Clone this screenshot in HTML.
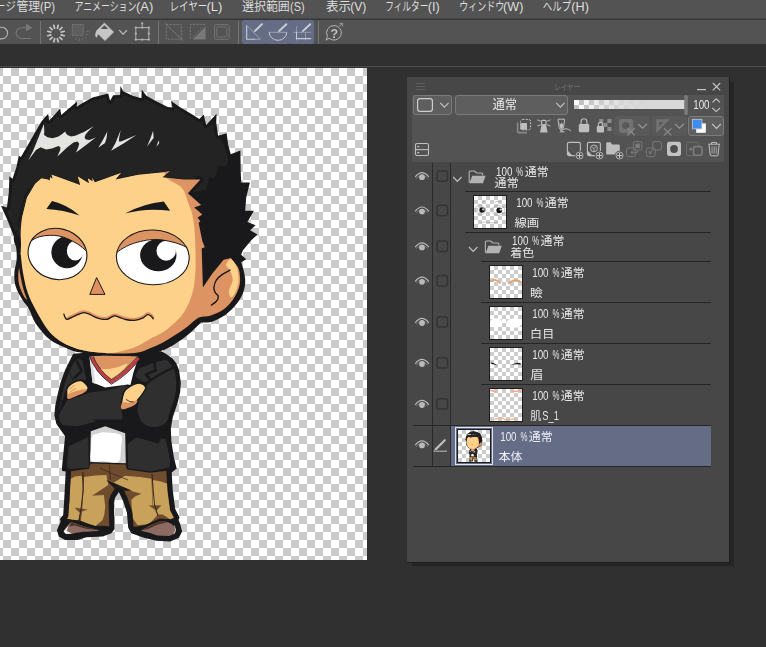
<!DOCTYPE html>
<html lang="ja">
<head>
<meta charset="utf-8">
<title>CLIP STUDIO PAINT</title>
<style>
*{box-sizing:border-box;margin:0;padding:0}
html,body{width:766px;height:647px;overflow:hidden;background:#303030}
svg#ui,svg#pn{position:absolute;left:0;top:0;display:block}
svg#pn{will-change:transform}
svg text{font-family:"Liberation Sans","Noto Sans CJK JP",sans-serif;white-space:pre}
</style>
</head>
<body>
<svg id="ui" width="766" height="647" viewBox="0 0 766 647">
<defs>
<pattern id="ck8" x="3" y="68" width="16" height="16" patternUnits="userSpaceOnUse"><rect width="16" height="16" fill="#ffffff"/><rect x="8" y="0" width="8" height="8" fill="#cacaca"/><rect x="0" y="8" width="8" height="8" fill="#cacaca"/></pattern>
<pattern id="ck4" x="0" y="0" width="8" height="8" patternUnits="userSpaceOnUse"><rect width="8" height="8" fill="#ffffff"/><rect x="4" y="0" width="4" height="4" fill="#cccccc"/><rect x="0" y="4" width="4" height="4" fill="#cccccc"/></pattern>
<pattern id="ck5" x="574" y="100" width="10" height="10" patternUnits="userSpaceOnUse"><rect width="10" height="10" fill="#ffffff"/><rect x="5" y="0" width="5" height="5" fill="#bdbdbd"/><rect x="0" y="5" width="5" height="5" fill="#bdbdbd"/></pattern>
<linearGradient id="opg" x1="0" x2="1" y1="0" y2="0"><stop offset="0" stop-color="#d8d8d8" stop-opacity="0"/><stop offset="0.2" stop-color="#d8d8d8" stop-opacity="0.5"/><stop offset="0.45" stop-color="#d8d8d8" stop-opacity="0.88"/><stop offset="0.7" stop-color="#d8d8d8" stop-opacity="1"/><stop offset="1" stop-color="#d8d8d8" stop-opacity="1"/></linearGradient>
</defs>
<rect x="0" y="0" width="766" height="647" fill="#303030"/>
<rect x="0" y="66" width="766" height="1" fill="#4e4e4e"/>
<rect x="0" y="0" width="766" height="19" fill="#535353"/>
<rect x="0" y="18.5" width="766" height="1.5" fill="#383838"/>
<text y="11.1" font-size="12" fill="#dedede"><tspan x="-4.63" textLength="20.34" lengthAdjust="spacingAndGlyphs">ージ</tspan><tspan x="16.43" textLength="23.73" lengthAdjust="spacingAndGlyphs">管理</tspan><tspan x="40.02" textLength="15.09" lengthAdjust="spacingAndGlyphs">(P)</tspan></text>
<text y="11.1" font-size="12" fill="#dedede"><tspan x="74.53" textLength="61.88" lengthAdjust="spacingAndGlyphs">アニメーション</tspan><tspan x="135.92" textLength="17.30" lengthAdjust="spacingAndGlyphs">(A)</tspan></text>
<text y="11.1" font-size="12" fill="#dedede"><tspan x="169.40" textLength="37.85" lengthAdjust="spacingAndGlyphs">レイヤー</tspan><tspan x="206.41" textLength="16.00" lengthAdjust="spacingAndGlyphs">(L)</tspan></text>
<text y="11.1" font-size="12" fill="#dedede"><tspan x="241.94" textLength="47.92" lengthAdjust="spacingAndGlyphs">選択範囲</tspan><tspan x="290.04" textLength="14.65" lengthAdjust="spacingAndGlyphs">(S)</tspan></text>
<text y="11.1" font-size="12" fill="#dedede"><tspan x="325.92" textLength="25.13" lengthAdjust="spacingAndGlyphs">表示</tspan><tspan x="350.18" textLength="16.09" lengthAdjust="spacingAndGlyphs">(V)</tspan></text>
<text y="11.1" font-size="12" fill="#dedede"><tspan x="385.19" textLength="43.18" lengthAdjust="spacingAndGlyphs">フィルター</tspan><tspan x="427.84" textLength="11.97" lengthAdjust="spacingAndGlyphs">(I)</tspan></text>
<text y="11.1" font-size="12" fill="#dedede"><tspan x="459.23" textLength="45.05" lengthAdjust="spacingAndGlyphs">ウィンドウ</tspan><tspan x="503.14" textLength="20.31" lengthAdjust="spacingAndGlyphs">(W)</tspan></text>
<text y="11.1" font-size="12" fill="#dedede"><tspan x="542.84" textLength="28.36" lengthAdjust="spacingAndGlyphs">ヘルプ</tspan><tspan x="571.34" textLength="17.60" lengthAdjust="spacingAndGlyphs">(H)</tspan></text>
<rect x="0" y="20" width="766" height="24" fill="#535353"/>
<path d="M-6 27.3H1.8a5.8 5.8 0 0 1 0 11.6H-6" fill="none" stroke="#b2b2b2" stroke-width="1.1"/>
<path d="M26 27.7H21.5a5.4 5.4 0 0 0 0 10.8H31" fill="none" stroke="#787878" stroke-width="1.1"/>
<path d="M26 23.6L32.3 27.7L26 31.6Z" fill="#787878"/>
<rect x="40.0" y="21" width="1" height="23" fill="#747474"/>
<rect x="158.0" y="21" width="1" height="23" fill="#747474"/>
<rect x="238.0" y="21" width="1" height="23" fill="#747474"/>
<rect x="318.0" y="21" width="1" height="23" fill="#747474"/>
<line x1="61.22" y1="34.90" x2="64.21" y2="35.70" stroke="#c6c6c6" stroke-width="1.7" stroke-linecap="round"/>
<line x1="59.82" y1="37.32" x2="62.01" y2="39.51" stroke="#c6c6c6" stroke-width="1.7" stroke-linecap="round"/>
<line x1="57.40" y1="38.72" x2="58.20" y2="41.71" stroke="#c6c6c6" stroke-width="1.7" stroke-linecap="round"/>
<line x1="54.60" y1="38.72" x2="53.80" y2="41.71" stroke="#c6c6c6" stroke-width="1.7" stroke-linecap="round"/>
<line x1="52.18" y1="37.32" x2="49.99" y2="39.51" stroke="#c6c6c6" stroke-width="1.7" stroke-linecap="round"/>
<line x1="50.78" y1="34.90" x2="47.79" y2="35.70" stroke="#c6c6c6" stroke-width="1.7" stroke-linecap="round"/>
<line x1="50.78" y1="32.10" x2="47.79" y2="31.30" stroke="#c6c6c6" stroke-width="1.7" stroke-linecap="round"/>
<line x1="52.18" y1="29.68" x2="49.99" y2="27.49" stroke="#c6c6c6" stroke-width="1.7" stroke-linecap="round"/>
<line x1="54.60" y1="28.28" x2="53.80" y2="25.29" stroke="#c6c6c6" stroke-width="1.7" stroke-linecap="round"/>
<line x1="57.40" y1="28.28" x2="58.20" y2="25.29" stroke="#c6c6c6" stroke-width="1.7" stroke-linecap="round"/>
<line x1="59.82" y1="29.68" x2="62.01" y2="27.49" stroke="#c6c6c6" stroke-width="1.7" stroke-linecap="round"/>
<line x1="61.22" y1="32.10" x2="64.21" y2="31.30" stroke="#c6c6c6" stroke-width="1.7" stroke-linecap="round"/>
<rect x="72.3" y="24.6" width="11" height="11" fill="#5e5e5e" stroke="#787878" stroke-width="1" stroke-dasharray="1.6 0.8"/>
<line x1="86.11" y1="34.22" x2="88.46" y2="35.08" stroke="#707070" stroke-width="1"/>
<line x1="84.60" y1="36.60" x2="86.36" y2="38.36" stroke="#707070" stroke-width="1"/>
<line x1="82.22" y1="38.11" x2="83.08" y2="40.46" stroke="#707070" stroke-width="1"/>
<line x1="79.43" y1="38.48" x2="79.22" y2="40.97" stroke="#707070" stroke-width="1"/>
<line x1="76.75" y1="37.63" x2="75.50" y2="39.79" stroke="#707070" stroke-width="1"/>
<line x1="86.48" y1="31.43" x2="88.97" y2="31.22" stroke="#707070" stroke-width="1"/>
<path d="M104.4 23L113.6 32.1L105 40.6L98 33.8C97 35.4 97.2 37.2 96.4 37.2C95.4 37.2 95.2 33.4 96.8 30.6Z" fill="#c6c6c6" stroke="#c6c6c6" stroke-width="0.6" stroke-linejoin="round"/>
<path d="M104.4 25.2L108.3 29H100.6Z" fill="#535353"/>
<path d="M119.2 30.2L123.1 34.2L127 30.2" fill="none" stroke="#c0c0c0" stroke-width="1.2"/>
<rect x="135.8" y="27.6" width="13" height="12" fill="none" stroke="#ababab" stroke-width="1.1"/>
<circle cx="135.8" cy="27.6" r="1.15" fill="#b4b4b4"/>
<circle cx="142.2" cy="27.6" r="1.15" fill="#b4b4b4"/>
<circle cx="148.8" cy="27.6" r="1.15" fill="#b4b4b4"/>
<circle cx="135.8" cy="33.6" r="1.15" fill="#b4b4b4"/>
<circle cx="148.8" cy="33.6" r="1.15" fill="#b4b4b4"/>
<circle cx="135.8" cy="39.6" r="1.15" fill="#b4b4b4"/>
<circle cx="142.2" cy="39.6" r="1.15" fill="#b4b4b4"/>
<circle cx="148.8" cy="39.6" r="1.15" fill="#b4b4b4"/>
<circle cx="142.2" cy="23.4" r="1.15" fill="#b4b4b4"/>
<line x1="142.2" y1="23.4" x2="142.2" y2="27.6" stroke="#ababab" stroke-width="1"/>
<rect x="166.3" y="24.6" width="15" height="14.6" fill="none" stroke="#787878" stroke-width="1" stroke-dasharray="2.2 1.2"/>
<line x1="165" y1="23.4" x2="183" y2="40.6" stroke="#787878" stroke-width="1"/>
<path d="M205.2 24.4H190.4V38.6" fill="none" stroke="#787878" stroke-width="1" stroke-dasharray="2.2 1.2"/>
<path d="M205.6 26.4V39.4H192.6Z" fill="#787878"/>
<line x1="192.6" y1="37.4" x2="203.6" y2="26.4" stroke="#787878" stroke-width="0.8" stroke-dasharray="1.6 1"/>
<rect x="214.5" y="24.6" width="14.6" height="14.8" rx="2" fill="none" stroke="#727272" stroke-width="1"/>
<rect x="216.8" y="26.9" width="10" height="10.2" rx="0.8" fill="none" stroke="#727272" stroke-width="1"/>
<rect x="242" y="20" width="72" height="24" rx="2.5" fill="#646c86"/>
<rect x="265.3" y="20" width="1.4" height="1" fill="#4e5468"/><rect x="265.3" y="43" width="1.4" height="1" fill="#4e5468"/>
<rect x="289.3" y="20" width="1.4" height="1" fill="#4e5468"/><rect x="289.3" y="43" width="1.4" height="1" fill="#4e5468"/>
<path d="M246.7 25.4V39.2H255.6" fill="none" stroke="#c9cbd2" stroke-width="1.1"/>
<path d="M255.6 39.2H260.4L246.7 25.4" fill="none" stroke="#a9adbc" stroke-width="0.8"/>
<path d="M255.2 30.8L261.9 24.2" fill="none" stroke="#c9cbd2" stroke-width="2" stroke-linecap="round"/>
<path d="M253.4 32.4L255.4 30.6" fill="none" stroke="#c9cbd2" stroke-width="0.8"/>
<path d="M268.8 32.3H287.1" fill="none" stroke="#a9adbc" stroke-width="0.8"/>
<path d="M269.2 32.3A8.75 8 0 0 0 286.7 32.3" fill="none" stroke="#c9cbd2" stroke-width="1"/>
<path d="M279.4 30.8L286.4 24.2" fill="none" stroke="#c9cbd2" stroke-width="2" stroke-linecap="round"/>
<path d="M277.6 32.4L279.6 30.6" fill="none" stroke="#c9cbd2" stroke-width="0.8"/>
<path d="M296.5 26V40.4M305.5 32.3V40.4M293 32.3H311.2" fill="none" stroke="#9da2b3" stroke-width="0.8"/>
<path d="M296.5 32.3V38.6H311.2" fill="none" stroke="#c9cbd2" stroke-width="1.1"/>
<path d="M303.2 30.8L310.2 24.2" fill="none" stroke="#c9cbd2" stroke-width="2" stroke-linecap="round"/>
<path d="M301.4 32.4L303.4 30.6" fill="none" stroke="#c9cbd2" stroke-width="0.8"/>
<path d="M334 25.6a7.4 7.2 0 1 1 -5 12.6L326.2 40.2L327.4 36.2A7.2 7.2 0 0 1 334 25.6Z" fill="none" stroke="#b6b6b6" stroke-width="1"/>
<path d="M339 26.2L342.4 23.6M339.6 23.4H342.6V26.4" fill="none" stroke="#a0a0a0" stroke-width="0.9"/>
<rect x="0" y="68" width="367" height="492" fill="url(#ck8)"/>
<g id="chara">
<path d="M73.2 353.8L65.1 370L60.4 383L57.5 395L55.2 406L54.4 415.2L56.3 423.8L61 430.6L65.1 436.3L63.4 453L61.9 468.4L62.2 471L65.7 471.6L64.4 496.3L63.2 515.1L60 518.9L60.6 521.6L56.9 530.2L58.8 536.4L65.1 539.9L77.6 540.1L86.4 537.3L102.7 536.4L111.4 533.3L114.6 528.9L113.9 502.6L115.2 497.6L118.9 491.9L123.2 501.3L126.9 512.6L128.2 527.7L131.3 533.3L143.9 537.7L156.4 540.8L170.2 541.4L178.9 537.7L182.1 531.4L180.2 523.9L178.4 520L179.6 517.6L175.2 508.9L172.7 490.1L171.7 472.5L176.7 468.6L173.9 457.6L171.4 441.3L170.8 428.8L172.7 417.5L175.2 410L177.7 402.6L180.2 392L180.8 382.6L179 370L176.4 363.6L172.7 358.8L167 354.4L161.4 351.3L120 350Z" fill="#19191b"/>
<clipPath id="bclip"><path d="M66.8 467.5L67.2 467.6L67.6 467.7L68 468L68.3 468.2L68.6 468.5L68.9 468.8L69.1 469L70.3 469L70.5 469.4L70.7 469.9L70.9 470.3L70.9 470.9L71 471.4L71 471.9L69.7 496.6L69.7 496.6L68.5 515.4L68.4 516L68.3 516.5L68.1 517.1L67.9 517.6L67.6 518.1L67.3 518.5L65.7 520.3L65.8 520.5L65.9 521L65.9 521.5L65.9 522.1L65.8 522.6L65.7 523.2L65.5 523.7L62.5 530.5L63.2 532.8L66.5 534.6L76.8 534.8L84.8 532.2L85.2 532.1L85.7 532.1L86.1 532L101.6 531.2L108.1 528.9L109.3 527.2L108.6 502.7L108.6 502.2L108.7 501.8L108.8 501.3L110.1 496.3L110.2 495.7L110.5 495.2L110.8 494.7L114.5 489L114.8 488.6L115.1 488.2L115.5 487.9L115.9 487.5L116.3 487.3L116.8 487L117.3 486.9L117.8 486.7L118.3 486.6L118.8 486.6L119.3 486.6L119.8 486.7L120.3 486.8L120.8 486.9L121.3 487.2L121.7 487.4L122.1 487.7L122.5 488L122.9 488.4L123.2 488.8L123.5 489.2L123.7 489.7L128 499.1L128.2 499.7L131.9 511L132.1 511.5L132.2 512.1L133.4 526.1L135 529L145.4 532.6L157.2 535.5L169.2 536.1L175 533.6L176.5 530.8L175.2 525.7L173.6 522.2L173.4 521.7L173.2 521.2L173.1 520.7L173.1 520.2L173.1 519.7L173.2 519.1L173.3 518.6L173.4 518.1L173.7 517.6L173.7 517.6L170.5 511.3L170.2 510.7L170.1 510.2L169.9 509.6L167.4 490.8L167.4 490.4L166.4 472.8L166.4 472.3L166.4 471.8L166.5 471.3L166.7 470.8L166.9 470.3L167.1 469.9L167.4 469.4L167.7 469L167.7 469L169.2 469L171.8 466.9L169.7 458.7L169.6 458.3L167.1 442L167.1 441.5L166.5 429L166.5 428.5L166.6 428.1L168.5 416.8L168.5 416.5L168.6 416.1L171.1 408.6L171.1 408.6L173.6 401.4L175.9 391.4L176.5 382.8L174.8 371.1L172.6 365.8L169.6 361.9L164.6 358L160.2 355.6L120.1 354.3L76 357.9L69.1 371.7L64.5 384.2L61.7 395.9L59.5 406.6L58.7 414.9L60.3 422L64.5 428.1L68.6 433.8L68.8 434.2L69 434.6L69.2 435L69.3 435.4L69.4 435.8L69.4 436.3L69.4 436.7L67.7 453.4L66.3 467.3L66.4 467.4Z" fill="#000" fill-rule="evenodd"/></clipPath>
<g clip-path="url(#bclip)">
<path d="M68.8 367.6C71.1 364.2 75.3 360.4 77.6 359.4C79.9 358.3 81.3 359.2 82.4 361.3C83.5 363.4 83.8 368.9 84.4 372C85 375.1 86.5 378.7 86 380C85.5 381.3 83.5 379.3 81.4 379.6C79.3 379.9 75.6 380.6 73.2 382C70.8 383.4 68.9 384 66.9 388C64.9 392 62.4 402.2 61 406C59.6 409.8 58.5 413 58.4 411C58.3 409 59.5 399.2 60.4 394C61.3 388.8 62.6 384.4 64 380C65.4 375.6 66.5 371 68.8 367.6Z" fill="#2f2f2f"/>
<path d="M76.6 360.6L81.6 371.3L73.8 378.4" fill="none" stroke="#19191b" stroke-width="2.6" stroke-linejoin="miter"/>
<path d="M68.6 370L73.2 381" fill="none" stroke="#19191b" stroke-width="0.8"/>
<path d="M61.3 410.2L66.9 400.1L80 396L90.1 392.4L98 391.6L105.2 390.8L115 388.4L125.2 384.8L127.7 387.6L122.1 393.9L121.5 407.7L122.7 417.7L121.5 419.4L92.6 419.4L96.4 421.3L77.6 426.3L61.3 425L57.6 419Z" fill="#2f2f2f"/>
<path d="M61.3 400L66.9 400.1L61.3 410.2Z" fill="#19191b"/>
<path d="M68.8 446.3L88.2 436.9L88.9 467.6L66.9 469.5L67.4 456Z" fill="#2f2f2f"/>
<path d="M138.8 368.8L153.9 362.5L166.4 359.4L172.7 366.3L150.1 380.1L146.4 382.6L141.4 381.3L135.1 376.3Z" fill="#2f2f2f"/>
<path d="M154.2 361.6L155.6 370.2L146.2 374.4L150.4 380" fill="none" stroke="#19191b" stroke-width="2.6"/>
<path d="M150.1 381.3C153.4 377.6 157.2 375.2 161 373C164.8 370.8 170.1 367 172.7 368.2C175.3 369.4 176 375.2 176.4 380.1C176.8 385 175.9 392.6 175.2 397.6C174.5 402.6 173.2 406.2 172 410C170.8 413.8 169.7 417.5 167.7 420.2C165.7 422.9 163.1 424.9 160.2 426C157.2 427.1 152.9 427.2 150 426.6C147.1 426.1 144.5 424.6 142.6 422.7C140.7 420.8 139.4 417.5 138.6 415C137.8 412.5 137.1 411 137.6 407.7C138.1 404.4 139.3 399.5 141.4 395.1C143.5 390.7 146.8 385 150.1 381.3Z" fill="#2f2f2f"/>
<path d="M146 383.6Q160 373 174 367.4" fill="none" stroke="#19191b" stroke-width="2.2"/>
<path d="M127.6 443.8L136.3 437.6L158 442.6L160.2 438.4L165.2 438.8L168 449L170.2 460L169.5 467.6L150.1 471.4L128.2 468.3Z" fill="#2f2f2f"/>
<path d="M137.6 436.8L158.6 443.4L160.6 438.6" fill="none" stroke="#19191b" stroke-width="0.8"/>
<path d="M89.2 355L137.6 357L137.6 360L133.6 372L130.4 385L127.7 384.5L105.2 387.6L92.6 382.6L91 370Z" fill="#ffffff"/>
<path d="M89.8 358L92.4 382.4L95.4 384L93.6 368Z" fill="#d9dde3"/>
<path d="M91.5 355L137.4 356.4L124 373L111.6 380.6L100 371Z" fill="#dd9462"/>
<path d="M100.2 369.4C100.8 368.4 105 369.4 108 369C111 368.6 114.8 367.9 118 367C121.2 366.1 126.9 362.7 127.4 363.6C127.9 364.5 123.6 369.9 121 372.6C118.4 375.3 114.3 379.2 111.6 379.6C108.9 380 106.5 376.7 104.6 375C102.7 373.3 99.6 370.4 100.2 369.4Z" fill="#fdd18a"/>
<path d="M90.6 354.6Q96.6 371.4 111.4 381.8Q126 373.4 138.6 358" fill="none" stroke="#bd3f43" stroke-width="3.5" stroke-linejoin="round"/>
<path d="M88.8 354.6Q94.8 372.4 111.4 384.2Q127.6 375 140 359" fill="none" stroke="#19191b" stroke-width="0.8"/>
<path d="M92.6 355Q98.6 370.4 111.4 379.4Q124.6 371.6 137 357" fill="none" stroke="#19191b" stroke-width="0.7"/>
<path d="M90.8 431.3L105.2 426.3L125.2 433.2L125.8 463.3L90.1 462Z" fill="#d2d2d2"/>
<path d="M92 436.4C93.1 434 95.8 434.3 98 433.6C100.2 432.9 101.2 432.2 105 432.4C108.8 432.6 117.9 432.4 120.6 435C123.3 437.6 121.4 443.5 121 448C120.6 452.5 121.2 459.6 118.4 461.8C115.6 464 108.5 461.4 104 461.2C99.5 461 93.5 462.8 91.4 460.6C89.3 458.4 91.1 452 91.2 448C91.3 444 90.9 438.8 92 436.4Z" fill="#ffffff"/>
<path d="M66.9 388.9C67.7 386.2 70.8 384 73.2 382.6C75.6 381.2 78.9 379.9 81.4 380.7C83.9 381.5 87.8 385.6 88.2 387.6C88.6 389.6 85.9 391.2 83.9 392.6C81.9 394 78.6 394.9 76 396C73.4 397.1 69.7 400.1 68.2 398.9C66.7 397.7 66.1 391.6 66.9 388.9Z" fill="#fdd18a" stroke="#19191b" stroke-width="1.4"/>
<path d="M68 394.4C69.6 393 74.8 391.5 78 390.6C81.2 389.7 86 388.8 87 389.2C88 389.6 85.7 391.6 83.9 392.8C82.1 394 78.6 395.2 76 396.2C73.4 397.2 69.7 399.3 68.4 399C67.1 398.7 66.4 395.8 68 394.4Z" fill="#dd9462"/>
<path d="M68.4 389.4L74.6 385.6M69.6 392.4L76 388.4" fill="none" stroke="#dd9462" stroke-width="1"/>
<path d="M121.9 408.9C120.2 406.8 122.4 396.4 123.8 392.6C125.2 388.9 127.4 388 130.1 386.4C132.8 384.8 137.5 383 140.1 383.2C142.7 383.4 145.4 385.7 145.7 387.6C146 389.5 143.3 392.5 142 394.6C140.7 396.7 139 398.3 137.6 400.1C136.2 401.9 136.4 403.7 133.8 405.2C131.2 406.7 123.6 411 121.9 408.9Z" fill="#fdd18a" stroke="#19191b" stroke-width="1.4"/>
<path d="M122.4 402.6C123.8 401.5 127.5 403 130 402.6C132.5 402.2 136.8 399.9 137.4 400.4C138 400.9 136.4 403.9 133.8 405.4C131.2 406.8 123.8 409.6 121.9 409.1C120 408.6 121.1 403.7 122.4 402.6Z" fill="#dd9462"/>
<path d="M126 399.4Q129.6 402.4 133.6 402" fill="none" stroke="#19191b" stroke-width="0.8"/>
<path d="M68.6 471.4L89 468.8L90.4 463.4L125.6 464.4L127 469.4L150 472.8L169.4 470.6L170.4 490L172.6 508L176.6 517L171.4 520.4L160 521L148 524.4L137.6 526.4L130.6 527L129.6 510L126.4 500L119 488.6L113 498L111.4 505L111.8 527L100 526.4L95.1 526.4L80.1 521.6L71.3 522.6L63.6 518.6L66.4 514.4L67.2 490Z" fill="#6f4c2e"/>
<path d="M70.7 478.8L75 476.4L81.6 475.7L82.6 484L82.6 490.1L82 500L81 508.9L78.6 520.1L71.3 521.8L66.3 518.6L67.6 510L69.4 502.6L69.8 490Z" fill="#c8a25a"/>
<path d="M83.9 476.9L95 475.6L106.4 475L108.3 485.1L100 490.6L92 495.7L103.9 495.1L105.2 506.4L104.4 514L102.7 520.1L95.1 526.2L88 524.2L80.8 521.6L82 512L82.6 502.6L83.6 490Z" fill="#c8a25a"/>
<path d="M74.5 507.6L87.6 509.6L79.4 512.4Z" fill="#6f4c2e"/>
<path d="M83 472L83.2 490L81.2 508L78.8 521" fill="none" stroke="#2a1c14" stroke-width="0.9"/>
<path d="M106.4 479.2L113.8 482.5L125.1 475.7L140 477L151.4 478.8L152 492L152.6 506.4L157.6 515.1L153 520L148.9 523.9L137.6 525.2L133.2 518.9L131.8 508L131.3 500.1L135 496.4L141.4 493.8L133 491.4L127.6 488.8L120 485.4Z" fill="#c8a25a"/>
<path d="M152.6 480L161 481.4L167.7 483.8L169 494L170.2 502.6L172 510L175.2 517.6L171.4 520.1L162.7 514.5L157.8 514.4L154 508L152.8 502.6L152.6 490Z" fill="#c8a25a"/>
<path d="M148.6 505.6L161.4 505.2L156.6 510.6Z" fill="#6f4c2e"/>
<path d="M152 474L153.2 490L154.4 504L158 516" fill="none" stroke="#2a1c14" stroke-width="0.9"/>
<path d="M106.3 480L131.3 490.4L117 491Z" fill="#19191b"/>
<path d="M100 468L112 473.6L128 480" fill="none" stroke="#3a2618" stroke-width="0.7"/>
<path d="M109.6 465L110.4 480" fill="none" stroke="#3a2618" stroke-width="0.8"/>
<path d="M63.8 531.4C63.5 530.1 65.8 527.9 67 526.4C68.2 524.9 69.5 523 71.3 522.6C73.1 522.2 75.5 523.4 77.6 524C79.7 524.6 81.7 525.7 83.9 526.4C86.1 527.1 88.5 527.7 91 528.4C93.5 529.1 99.1 529.9 98.9 530.4C98.7 530.9 92.9 531.3 90 531.6C87.1 531.9 84.9 531.6 81.4 532C77.9 532.4 71.7 534 68.8 533.9C65.9 533.8 64.1 532.6 63.8 531.4Z" fill="#8c6b62"/>
<path d="M71.3 522.4L83.9 526L98.9 530.2L86 528.8L74.6 525.4L69 526.4Z" fill="#4e332a"/>
<path d="M63.6 531.4L68.6 525.6L66.6 531L72 533.4L66 534Z" fill="#ffffff"/>
<path d="M141.4 530.4C141.4 529.2 146.9 527.2 150 525.6C153.1 524 156.6 521.1 160.2 520.8C163.8 520.5 168.8 522.3 171.4 523.9C174 525.5 175.6 528.2 175.8 530.2C176 532.2 175.3 534.8 172.7 535.8C170.1 536.8 164 536.9 160.2 536.4C156.4 535.9 153.2 533.9 150.1 532.9C147 531.9 141.4 531.6 141.4 530.4Z" fill="#8c6b62"/>
<path d="M141 530.4L160.2 520.6L168 522L158 524.6L148 529Z" fill="#4e332a"/>
<path d="M174.6 525.4Q177 530 173.6 535" fill="none" stroke="#e8e8e8" stroke-width="0.7"/>
<path d="M134 531.6L141.6 528.6L150 524L160.2 519.6L171.4 520.4L178 516.6" fill="none" stroke="#19191b" stroke-width="2.4" stroke-linejoin="round"/>
<path d="M62 518L66.6 520L71.3 520.8L80.1 522L88 524.8L95.1 527.2L104 527L113 528" fill="none" stroke="#19191b" stroke-width="2.4" stroke-linejoin="round"/>
</g>
<path d="M13.8 236C13.5 244 15.7 244 16.2 248C16.7 252 16.9 255.9 16.6 260C16.3 264.1 14.6 268.2 14.4 272.6C14.2 277 14.3 281.8 15.7 286.4C17.1 291 20.4 296.3 22.6 300C24.8 303.7 26.7 305 28.8 308.8C30.9 312.6 32.6 318.4 35.1 322.6C37.6 326.8 41 330.8 43.9 333.9C46.8 337 49 339.1 52.6 341.4C56.2 343.7 61.4 345.9 65.2 347.6C69 349.3 70.1 350.3 75.2 351.4C80.3 352.5 88.5 353.7 96 354.4C103.5 355.1 112.2 355.6 120 355.8C127.8 356 136.1 356.2 143 355.4C149.9 354.6 156 352.7 161.3 350.8C166.7 348.9 170.7 346.5 175.1 343.9C179.5 341.3 183.4 338.5 187.6 335.1C191.8 331.7 197.6 325.5 200.1 323.4C202.6 321.3 200.7 322.8 202.8 322.5C204.9 322.2 209 322.6 212.7 321.4C216.4 320.2 221 318.2 225.2 315.1C229.4 312 234.6 306.8 237.7 302.6C240.8 298.4 242.8 294.2 244 290C245.2 285.8 245.5 282 245 277.4C244.5 272.8 242.7 266.9 241.2 262.3C239.7 257.7 238.7 260.4 236 250C233.3 239.6 231 215 225 200C219 185 220.8 168.3 200 160C179.2 151.7 126.7 150 100 150C73.3 150 53.7 151.7 40 160C26.3 168.3 22.4 187.3 18 200C13.6 212.7 14.1 228 13.8 236Z" fill="#19191b"/>
<path d="M21 245C20.8 255.2 21 256.8 20.6 261.4C20.2 266 18.6 268.6 18.4 272.6C18.2 276.6 18.2 281.2 19.4 285.5C20.6 289.8 23.5 296 25.5 298.6C27.5 301.2 28.9 298.1 31.3 301.3C33.7 304.5 37 312.4 40.1 317.6C43.2 322.8 46.3 328.4 50.1 332.6C53.9 336.8 58.1 339.9 62.7 342.6C67.3 345.3 72.2 347.3 77.7 348.9C83.2 350.5 89.3 351.4 96 352.2C102.7 353 111 353.5 118 353.6C125 353.7 132.7 353.5 138 352.6C143.3 351.7 145.9 350 150 348.3C154.1 346.6 158.3 344.9 162.5 342.7C166.7 340.5 170.9 337.8 175.1 335.1C179.3 332.4 183.6 329.3 187.6 326.4C191.6 323.5 195.1 319.4 198.9 317.6C202.7 315.8 206.2 316.9 210.2 315.7C214.2 314.4 218.9 312.7 222.7 310.1C226.4 307.5 230 303.9 232.7 300.1C235.4 296.3 237.8 291.4 239 287.5C240.2 283.6 240.2 280.4 240 277C239.8 273.6 239.5 270.5 238 267.3C236.5 264.1 233.8 262.4 231.1 257.9C228.4 253.3 224.7 249.7 222 240C219.3 230.3 219.5 213.3 215 200C210.5 186.7 214.2 168.3 195 160C175.8 151.7 125.8 150 100 150C74.2 150 53 151.7 40 160C27 168.3 25.2 185.8 22 200C18.8 214.2 21.2 234.8 21 245Z" fill="#dd9462"/>
<path d="M21 245C20.8 255.2 20.3 256.8 20.6 261.4C20.9 266 21.7 267.8 22.6 272.6C23.6 277.4 24.9 285.4 26.3 290.2C27.8 295 29 296.7 31.3 301.3C33.6 305.9 37 312.4 40.1 317.6C43.2 322.8 46.3 328.4 50.1 332.6C53.9 336.8 58.1 339.9 62.7 342.6C67.3 345.3 72.2 347.3 77.7 348.9C83.2 350.5 90.3 351.5 96 352.2C101.7 352.9 106.7 353.4 112 353C117.3 352.6 123.2 351 128 349.6C132.8 348.2 136.8 346.2 140.5 344.4C144.2 342.6 146.3 340.9 150 338.9C153.7 336.9 158.3 335.3 162.5 332.6C166.7 329.9 171.5 325.9 175.1 322.6C178.7 319.3 181.3 316.4 183.8 312.6C186.3 308.9 188.4 304.5 190.1 300.1C191.8 295.7 193 291.7 193.9 286.3C194.8 280.9 195.3 274.1 195.6 268C195.8 261.9 195.6 256.7 195.4 250C195.2 243.3 195 233.9 194.4 227.6C193.8 221.3 192.7 215.9 191.7 212C190.7 208.1 189.9 207.6 188.5 203.9C187.1 200.2 185.6 193.3 183.5 190C181.4 186.7 178.8 185.8 176 183.8C173.2 181.8 170.5 181.3 167 178.2C163.5 175.1 166.2 169.7 155 165C143.8 160.3 119.2 150.8 100 150C80.8 149.2 53 151.7 40 160C27 168.3 25.2 185.8 22 200C18.8 214.2 21.2 234.8 21 245Z" fill="#fdd18a"/>
<path d="M19.4 256C19.7 258.8 20.4 266.9 21.4 272.6C22.4 278.3 23.8 285.2 25.2 290C26.6 294.8 28.9 299.7 29.6 301.6" fill="none" stroke="#19191b" stroke-width="3" stroke-linecap="round" stroke-linejoin="round"/>
<path d="M226.1 264.8C226.3 262.9 229.3 259 231.1 259.4C232.9 259.8 235.6 263.9 236.8 267.3C238.1 270.7 238.7 275.9 238.6 279.9C238.5 283.8 237.2 288.1 236 291C234.8 293.9 232.7 297.4 231.5 297.5C230.3 297.6 228.7 294.2 228.9 291.3C229.1 288.4 232.5 283.5 232.7 280C232.9 276.5 231 273 229.9 270.5C228.8 268 225.9 266.7 226.1 264.8Z" fill="#fdd18a"/>
<path d="M229.9 270.1C228.6 270.9 224.2 273 222 274.6C219.8 276.2 217.8 277.9 216.4 280C215.1 282.1 214.1 285.4 213.9 287.5C213.7 289.6 214.5 291 215.2 292.5C215.9 294 218.1 294.8 218.3 296.3C218.5 297.8 217.6 299.8 216.4 301.3C215.2 302.8 212.2 304.5 211.4 305.1" fill="none" stroke="#19191b" stroke-width="1.4" stroke-linecap="round" stroke-linejoin="round"/>
<path d="M13.8 236L7.5 220.2L1 205.8L6.9 207.6L8.8 192.6L9.4 176.3L12.5 178.8L16.3 167.5L18.8 155.5L20.8 157.2L31.3 138.9L41.4 121.4L48.2 113.8L49.1 120.7L60.2 108.6L61.2 115.1L77.1 101.6L76.7 106.9L80 104.4L92.5 97.5L108.2 93.5L110.1 100.7L113.2 95.3L120.1 95L120.4 86L123.2 91.3L132.6 95.7L141.4 98.2L141.7 89.4L146.4 95.7L155.2 100.7L167.7 106.9L172.4 107.5L171.1 101L180.5 107.5L193.1 115.1L199.3 119.1L203.7 114.4L206.2 125.1L216.6 113.8L216.2 122.6L218.1 135.7L226.6 133.2L228.2 145.1L230.7 154.2L240.4 150.4L240.7 171L241.2 182.6L249.9 182.6L246.2 197.6L245.2 210.8L253.9 210.8L247.4 222L255.6 225.2L250.2 230.2L257.5 234.6L251.2 240.2L242.4 251L241.2 254.8L246.2 259.2L241.2 262.3L231.1 257.9L223.6 259.8L212 274L202.9 287.4L202.2 265L201.7 248.5L204.8 247.3L202.3 241L198.6 222.7L200.4 221.4L197.6 217.6L202.3 214.5L194.2 207.4L201.1 205.1L187.9 193.2L200.4 179.4L184 179.4L162.6 177.3L170.1 171L163.2 172.3L138.1 174.8L115.6 179.4L121.2 172.8L94.9 182.3L92.1 177.6L92.7 181.3L87.7 178.2L89 183.2L77.7 176.3L80.2 185.1L65.2 179.4L51.4 174.4L52.6 178.8L50.1 176.9L49.5 180.7L48.2 179.4L41.4 178.2L35.1 183.8L26.9 197.6L21.9 217.7L20 236Z" fill="#19191b"/>
<path d="M7.2 212.3L10.3 219.1L14.6 229.9L15.4 230.8L16.7 230.8L17.3 230.3L17.6 229.6L19 216.9L24.3 196L32.6 182.5L24.5 200.2L16.6 235.5L19.5 235.5L21.4 217.6L21.4 217.6L26.4 197.5L26.4 197.4L26.4 197.4L26.5 197.3L34.7 183.5L34.7 183.5L34.7 183.5L34.8 183.4L41.1 177.8L41.1 177.8L41.1 177.8L41.2 177.7L41.2 177.7L41.3 177.7L41.3 177.7L41.4 177.7L41.4 177.7L41.5 177.7L48.3 178.9L48.3 178.9L48.4 178.9L48.4 179L48.5 179L48.5 179L48.6 179L49.2 179.7L49.6 176.8L49.6 176.8L49.6 176.7L49.7 176.7L49.7 176.6L49.7 176.6L49.7 176.6L49.8 176.5L49.8 176.5L49.8 176.5L49.9 176.4L49.9 176.4L50 176.4L50 176.4L50.1 176.4L50.1 176.4L50.2 176.4L50.2 176.4L50.3 176.4L50.3 176.5L50.4 176.5L50.4 176.5L51.7 177.5L50.9 174.5L50.9 174.5L50.9 174.4L50.9 174.4L50.9 174.3L50.9 174.3L50.9 174.2L50.9 174.2L51 174.1L51 174.1L51 174.1L51.1 174L51.1 174L51.1 174L51.2 173.9L51.2 173.9L51.3 173.9L51.3 173.9L51.4 173.9L51.4 173.9L51.5 173.9L51.5 173.9L51.6 173.9L65.4 178.9L65.4 178.9L79.4 184.3L77.2 176.4L77.2 176.4L77.2 176.3L77.2 176.3L77.2 176.2L77.2 176.2L77.2 176.1L77.2 176.1L77.3 176.1L77.3 176L77.3 176L77.4 175.9L77.4 175.9L77.4 175.9L77.5 175.8L77.5 175.8L77.6 175.8L77.6 175.8L77.7 175.8L77.7 175.8L77.8 175.8L77.8 175.8L77.9 175.8L77.9 175.8L78 175.9L88.2 182.1L87.2 178.3L87.2 178.3L87.2 178.2L87.2 178.2L87.2 178.1L87.2 178.1L87.2 178L87.2 178L87.3 177.9L87.3 177.9L87.3 177.9L87.4 177.8L87.4 177.8L87.4 177.8L87.5 177.7L87.5 177.7L87.6 177.7L87.6 177.7L87.7 177.7L87.7 177.7L87.8 177.7L87.8 177.7L87.9 177.7L87.9 177.8L88 177.8L92 180.3L91.6 177.7L91.6 177.6L91.6 177.6L91.6 177.5L91.6 177.5L91.6 177.4L91.6 177.4L91.7 177.3L91.7 177.3L91.7 177.3L91.8 177.2L91.8 177.2L91.8 177.2L91.9 177.1L91.9 177.1L92 177.1L92 177.1L92.1 177.1L92.1 177.1L92.2 177.1L92.2 177.1L92.3 177.1L92.3 177.1L92.4 177.2L92.4 177.2L92.4 177.2L92.5 177.3L92.5 177.3L92.5 177.3L95.1 181.7L121 172.3L121.1 172.3L121.1 172.3L121.2 172.3L121.2 172.3L121.3 172.3L121.3 172.3L121.4 172.3L121.4 172.3L121.5 172.4L121.5 172.4L121.5 172.4L121.6 172.5L121.6 172.5L121.6 172.5L121.6 172.6L121.7 172.6L121.7 172.7L121.7 172.7L121.7 172.8L121.7 172.8L121.7 172.9L121.7 172.9L121.7 173L121.7 173L121.6 173L121.6 173.1L121.6 173.1L116.9 178.6L138 174.3L138.1 174.3L163.1 171.8L170 170.5L170.1 170.5L170.1 170.5L170.2 170.5L170.2 170.5L170.2 170.5L170.3 170.5L170.3 170.6L170.4 170.6L170.4 170.6L170.5 170.6L170.5 170.7L170.5 170.7L170.5 170.8L170.6 170.8L170.6 170.9L170.6 170.9L170.6 170.9L170.6 171L170.6 171L170.6 171.1L170.6 171.1L170.6 171.2L170.5 171.2L170.5 171.3L170.5 171.3L170.5 171.3L170.4 171.4L163.8 176.9L184 178.9L195.3 178.9L194.6 176.4L200.7 176.4L202.3 177.1L203.2 178.3L203.4 179.8L202.8 181.2L193.2 191.8L193 192.5L206 190L207.3 185.1L209.5 177L213.6 178.8L216.5 173.8L218.5 165L222 166.8L226.5 166L228 160L227.5 155L223.5 144L219.8 138.3L218.7 138.6L217.8 138.7L216.6 138.3L215.7 137.5L215.1 136.1L213.6 125.4L213.2 124.5L212.2 124L211.3 124.2L207.7 127.7L206.6 128.1L205.2 127.9L204.4 127.5L203.6 126.6L202.6 122.8L202 122.1L201.1 121.7L199.4 122.1L197.9 121.8L176.8 108.6L175.5 108.7L174 110L172.6 110.5L167 109.8L153.9 103.4L145.9 98.9L145.1 98.9L144.5 99.1L143.4 100.4L142.6 100.9L140.9 101.2L131.6 98.5L124.4 95.3L123.4 95.6L122.1 97.2L121.1 97.8L115.7 98.2L115.1 98.4L114.6 98.9L112.4 102.7L111.4 103.4L110.6 103.7L109.1 103.5L107.9 102.7L107.3 101.7L106.4 98.4L106 97.9L105.3 97.5L104.5 97.5L93.7 100.3L81.7 106.9L78 109.6L76.3 109.9L74.1 108.9L73 109L62.4 117.8L60.7 118.1L59.6 117.7L58.3 116.6L57.7 116.5L56.9 116.7L51.3 122.7L50.4 123.4L49.5 123.7L48.3 123.6L45.8 122.1L44.5 122.5L43.8 123.3L23.4 158.7L22.9 159.4L21.3 160.2L20.8 160.9L19.1 168.5L15.2 180L14.4 181.2L12.7 182L12.2 182.9L11.8 193L9.9 207.9L9.4 209.3L7.3 211.2Z" fill="#232323" fill-rule="evenodd"/>
<path d="M28.2 160.6L33 151L38.5 137.5L43.9 123.9L44.3 131L44.1 135.1L47.5 137.3L52.6 138.3L58.5 136.6L62.5 133.8L65.2 131.4L66 133.4L67.5 135L71 136.4L75.2 135.8L84 132L94 126.1L89 130.4L85.6 134.6L84.6 137.6L85.8 139.6L89.6 140L95.8 137.6L88 143.4L76 152.6L78.4 147L79.2 143.6L77.4 141.4L73.4 142.6L67 147.4L57.4 156.6L60.2 150L60.4 147.2L58.4 146L52 148.4L46 149.4L40.6 147.2L36 150Z" fill="#e4e4e2"/>
<path d="M107.3 131.6L106.6 138L105 143L98.2 147.7L102.6 140.6Z" fill="#e4e4e2"/>
<path d="M120.7 130.1L119.3 137L118.8 141.4L121 141.6L136.4 135.1L123.5 143.5L111.1 150.8L115.5 143Z" fill="#e4e4e2"/>
<path d="M153.1 130.8L153.6 138L147 146.4L150.6 138Z" fill="#e4e4e2"/>
<path d="M159 140.2L159.2 143L156.4 147L157.6 143Z" fill="#e4e4e2"/>
<clipPath id="eL"><ellipse cx="57.5" cy="254" rx="29.6" ry="25.4" transform="rotate(14 57.5 254)"/></clipPath>
<ellipse cx="57.5" cy="254" rx="29.6" ry="25.4" transform="rotate(14 57.5 254)" fill="#fff"/>
<g clip-path="url(#eL)">
<ellipse cx="67" cy="252.2" rx="15.6" ry="16" fill="#19191b"/>
<ellipse cx="75.2" cy="250.7" rx="8.3" ry="9.9" fill="#fff"/>
<path d="M29 245C29.4 244.3 29.5 242.1 31.3 240.7C33.1 239.3 36.9 237.5 40 236.6C43.1 235.7 46.9 235.4 50.1 235.3C53.3 235.2 56.1 235.4 59 236C61.9 236.6 64.7 237.5 67.7 238.8C70.7 240.1 74.3 241.9 77 243.6C79.7 245.3 82.3 247.4 84 248.8C85.7 250.2 86.5 251.5 87 252L97 212L19 205Z" fill="#dd9462" stroke="#19191b" stroke-width="1"/>
</g>
<ellipse cx="57.5" cy="254" rx="29.6" ry="25.4" transform="rotate(14 57.5 254)" fill="none" stroke="#19191b" stroke-width="1.1"/>
<clipPath id="eR"><ellipse cx="152.8" cy="257.4" rx="36.4" ry="27.4" transform="rotate(2 152.8 257.4)"/></clipPath>
<ellipse cx="152.8" cy="257.4" rx="36.4" ry="27.4" transform="rotate(2 152.8 257.4)" fill="#fff"/>
<g clip-path="url(#eR)">
<ellipse cx="158.3" cy="255.1" rx="18.2" ry="16.2" fill="#19191b"/>
<ellipse cx="166.2" cy="250.7" rx="9.7" ry="10" fill="#fff"/>
<path d="M116 254C116.4 253.6 115.9 252.9 118.2 251.3C120.5 249.7 125.7 246.4 130 244.6C134.3 242.8 140.1 241.5 143.9 240.7C147.7 239.9 149.9 239.7 153 239.6C156.1 239.5 159.2 239.5 162.7 240C166.2 240.5 170.6 241.5 174 242.4C177.4 243.3 180.8 244.6 183.3 245.7C185.8 246.8 188.1 248.4 189 249L199 209L106 214Z" fill="#dd9462" stroke="#19191b" stroke-width="1"/>
</g>
<ellipse cx="152.8" cy="257.4" rx="36.4" ry="27.4" transform="rotate(2 152.8 257.4)" fill="none" stroke="#19191b" stroke-width="1.1"/>
<path d="M46.4 208.9L52 201.1Q67 204.6 79.6 215.5Q63 209.6 46.4 208.9Z" fill="#19191b"/>
<path d="M125 213.6Q144 203.4 163.8 201.6L170.1 210.8Q146 207.6 125 213.6Z" fill="#19191b"/>
<path d="M96.6 277.6L105 294.4H89.8Z" fill="#e0905f" stroke="#19191b" stroke-width="1" stroke-linejoin="round"/>
<path d="M67.4 318.1C68.7 317.5 72.5 315.6 75 314.5C77.5 313.4 80.5 311.9 82.7 311.5C84.9 311.1 86.1 311.7 88 312.3C89.9 312.9 91.9 314.4 94 315.3C96.1 316.2 98.4 317.1 100.5 317.6C102.6 318 105 318.2 106.8 318C108.5 317.8 109.7 316.7 111 316.1C112.3 315.5 113.4 314.6 114.9 314.6C116.4 314.6 118.2 315.7 120 316.3C121.8 316.9 123.2 317.7 125.6 318.2C128 318.7 131.5 319.4 134.4 319.1C137.3 318.8 140.9 317.5 143.1 316.5C145.3 315.5 146.2 313.6 147.5 313.3C148.8 313 150.1 314 151 314.7C151.9 315.4 152.8 317 153.2 317.5" fill="none" stroke="#e0905f" stroke-width="2.4" stroke-linecap="round" stroke-linejoin="round"/>
<path d="M63.9 314.2C64.1 314.8 64.6 316.7 65.2 317.6C65.8 318.5 65.8 319.7 67.4 319.4C69 319.1 72.5 316.9 75 315.8C77.5 314.7 80.5 313.2 82.7 312.8C84.9 312.4 86.1 313 88 313.6C89.9 314.2 91.9 315.7 94 316.6C96.1 317.5 98.4 318.4 100.5 318.9C102.6 319.3 105 319.6 106.8 319.3C108.5 319.1 109.7 318 111 317.4C112.3 316.8 113.4 315.9 114.9 315.9C116.4 315.9 118.2 317 120 317.6C121.8 318.2 123.2 319 125.6 319.5C128 320 131.5 320.7 134.4 320.4C137.3 320.1 140.9 318.8 143.1 317.8C145.3 316.8 146.2 314.9 147.5 314.6C148.8 314.3 150.1 315.3 151 316C151.9 316.7 152.8 318.3 153.2 318.8" fill="none" stroke="#19191b" stroke-width="1.3" stroke-linecap="round" stroke-linejoin="round"/>
</g>
</svg>
<svg id="pn" width="766" height="647" viewBox="0 0 766 647">
<text x="330.4" y="37.6" font-size="12.5" fill="#c2c2c2" font-weight="bold">?</text>
<rect x="412" y="82" width="322" height="484" fill="#252525"/>
<rect x="407" y="77" width="323" height="486" fill="#1e1e1e"/>
<rect x="407" y="77" width="322" height="485" fill="#474747"/>
<rect x="412" y="95" width="312" height="67" fill="#535353"/>
<rect x="416" y="83" width="9" height="1" fill="#5d5d5d"/>
<rect x="416" y="86" width="9" height="1" fill="#5d5d5d"/>
<rect x="416" y="89" width="9" height="1" fill="#5d5d5d"/>
<text y="89.7" font-size="8.4" fill="#767676"><tspan x="554.27" textLength="25.89" lengthAdjust="spacingAndGlyphs">レイヤー</tspan></text>
<rect x="697" y="89" width="9" height="1.2" fill="#c6c6c6"/>
<path d="M712.8 83L720.2 90.4M720.2 83L712.8 90.4" stroke="#c6c6c6" stroke-width="1.1" fill="none"/>
<rect x="413.5" y="95.5" width="38" height="19" rx="2.5" fill="#5e5e5e" stroke="#7a7a7a" stroke-width="1"/>
<rect x="417.6" y="98.6" width="14.8" height="12.8" rx="2.4" fill="none" stroke="#cdcdcd" stroke-width="1.2"/>
<path d="M440.2 102.8L444.4 107.2L448.6 102.8" fill="none" stroke="#c4c4c4" stroke-width="1.1"/>
<rect x="455.5" y="95.5" width="112" height="19" rx="2.5" fill="#5e5e5e" stroke="#7a7a7a" stroke-width="1"/>
<text y="109.2" font-size="12.2" fill="#e8e8e8"><tspan x="492.53" textLength="24.44" lengthAdjust="spacingAndGlyphs">通常</tspan></text>
<path d="M556.2 102.8L560.4000000000001 107.2L564.6 102.8" fill="none" stroke="#c4c4c4" stroke-width="1.1"/>
<rect x="574" y="100" width="111" height="9" fill="url(#ck5)"/>
<rect x="574" y="100" width="111" height="9" fill="url(#opg)"/>
<rect x="684.2" y="95" width="3.6" height="20" rx="1.6" fill="#7a7a7a"/>
<text y="109.1" font-size="13.2" fill="#e8e8e8"><tspan x="693.21" textLength="16.37" lengthAdjust="spacingAndGlyphs">100</tspan></text>
<path d="M712.4 102.4L716.2 98.8L720 102.4" fill="none" stroke="#c4c4c4" stroke-width="1.1"/>
<path d="M712.4 108L716.2 111.6L720 108" fill="none" stroke="#c4c4c4" stroke-width="1.1"/>
<path d="M517.6 122.4V131.2Q517.6 132.6 519 132.6H527" fill="none" stroke="#8a8a8a" stroke-width="1.6"/>
<rect x="520.6" y="119.4" width="10" height="10.4" rx="2" fill="none" stroke="#bebebe" stroke-width="1" stroke-dasharray="2 1.2"/>
<rect x="520.4" y="123" width="6.6" height="6.8" rx="0.8" fill="#bebebe"/>
<path d="M541.6 124.6H546L547.6 132.6H540Z" fill="#bebebe"/>
<rect x="541.6" y="120.4" width="4.4" height="4.4" rx="1" fill="none" stroke="#bebebe" stroke-width="1.1"/>
<path d="M537.2 119.8L541.2 121.4M537.2 126L541.2 124.6M550.6 119.8L546.6 121.4M550.6 126L546.6 124.6" fill="none" stroke="#bebebe" stroke-width="0.9"/>
<path d="M558 119.2H564.6L563.6 127.2L561.4 131.6L559 127.2Z" fill="none" stroke="#bebebe" stroke-width="1"/>
<path d="M559.6 122.6L560.6 124.4L561.4 122.4L562.4 124.4L563.2 122.6L563 127L561.4 130L559.8 127Z" fill="#bebebe"/>
<path d="M559.8 131.8H564.6M562.6 130Q566.6 127 570.8 131" fill="none" stroke="#bebebe" stroke-width="1"/>
<rect x="578.8" y="124" width="10.4" height="8.2" rx="1.2" fill="#bebebe"/><path d="M581.088 124.5V121.66a2.9120000000000004 2.8600000000000003 0 0 1 5.824000000000001 0V124.5" fill="none" stroke="#bebebe" stroke-width="1.1"/>
<rect x="599.2" y="119" width="4.1" height="4" fill="#8c8c8c"/>
<rect x="607.4" y="119" width="4.1" height="4" fill="#8c8c8c"/>
<rect x="603.3" y="123" width="4.1" height="4" fill="#8c8c8c"/>
<rect x="607.4" y="127" width="4.1" height="4" fill="#8c8c8c"/>
<rect x="596.8" y="126" width="7.2" height="6.4" rx="1.2" fill="#bebebe"/><path d="M598.3839999999999 126.5V124.38a2.0160000000000005 1.9800000000000002 0 0 1 4.032000000000001 0V126.5" fill="none" stroke="#bebebe" stroke-width="1.1"/>
<rect x="614" y="116" width="36" height="20" rx="3" fill="#595959"/>
<rect x="619" y="119" width="14.2" height="14" rx="2.4" fill="#737373"/>
<circle cx="625.8" cy="125.6" r="3.6" fill="#595959"/>
<path d="M627.4 128L634.8 135.2M634.8 128L627.4 135.2" stroke="#8a8a8a" stroke-width="1.2" fill="none"/>
<path d="M638 123.8L642.5 128.2L647 123.8" fill="none" stroke="#9a9a9a" stroke-width="1.1"/>
<rect x="651.4" y="116" width="35.6" height="20" rx="3" fill="#595959"/>
<path d="M656.2 119.2H669.8L656.2 133Z" fill="#737373"/>
<path d="M659 122H663.4L659 126.4Z" fill="#595959"/>
<path d="M664 128.2L671.4 135.4M671.4 128.2L664 135.4" stroke="#8a8a8a" stroke-width="1.2" fill="none"/>
<path d="M675 123.8L679.4 128.2L683.8 123.8" fill="none" stroke="#9a9a9a" stroke-width="1.1"/>
<rect x="688.5" y="116.5" width="35" height="19" rx="2.5" fill="#5f5f5f" stroke="#7b7b7b" stroke-width="1"/>
<rect x="696.2" y="123.4" width="9.6" height="9.4" fill="#ffffff"/>
<rect x="692.3" y="119.3" width="9.6" height="9.6" fill="#3d8df0" stroke="#c9c9c9" stroke-width="0.8"/>
<path d="M712.2 124L716.5 128.4L720.8 124" fill="none" stroke="#c4c4c4" stroke-width="1.1"/>
<rect x="415.5" y="143.5" width="13" height="12" rx="1.6" fill="none" stroke="#bebebe" stroke-width="1.1"/>
<path d="M415.5 149.6H428.5" stroke="#bebebe" stroke-width="1.1"/>
<path d="M417.2 146.6H419.2M417.2 152.6H419.2" stroke="#bebebe" stroke-width="1.2"/>
<rect x="567.4" y="142.4" width="13" height="13.2" rx="1.6" fill="none" stroke="#bebebe" stroke-width="1.1"/>
<path d="M568 151L572.4 155.4H568Z" fill="#bebebe"/>
<circle cx="579.5" cy="155.5" r="4.7" fill="#535353"/><circle cx="579.5" cy="155.5" r="3.5" fill="none" stroke="#bebebe" stroke-width="0.9"/><rect x="577.0" y="155.0" width="5" height="1" fill="#c8c8c8"/><rect x="579.0" y="153.0" width="1" height="5" fill="#c8c8c8"/>
<rect x="587.4" y="142.4" width="13" height="13.2" rx="1.6" fill="none" stroke="#bebebe" stroke-width="1.1"/>
<path d="M588 151L592.4 155.4H588Z" fill="#bebebe"/>
<circle cx="594" cy="148.4" r="3.4" fill="none" stroke="#bebebe" stroke-width="0.9"/>
<path d="M591.6 146.2L594 148.6L596.4 146.2M594 148.6V151.6" fill="none" stroke="#bebebe" stroke-width="0.8"/>
<circle cx="599.5" cy="155.5" r="4.7" fill="#535353"/><circle cx="599.5" cy="155.5" r="3.5" fill="none" stroke="#bebebe" stroke-width="0.9"/><rect x="597.0" y="155.0" width="5" height="1" fill="#c8c8c8"/><rect x="599.0" y="153.0" width="1" height="5" fill="#c8c8c8"/>
<path d="M606.2 154.6V143.2Q606.2 142.2 607.2 142.2H610.6L612.2 144.4H618.8Q619.8 144.4 619.8 145.4V154.6Z" fill="#bebebe"/>
<circle cx="619.5" cy="155.5" r="4.7" fill="#535353"/><circle cx="619.5" cy="155.5" r="3.5" fill="none" stroke="#bebebe" stroke-width="0.9"/><rect x="617.0" y="155.0" width="5" height="1" fill="#c8c8c8"/><rect x="619.0" y="153.0" width="1" height="5" fill="#c8c8c8"/>
<rect x="633.4" y="141.6" width="8.4" height="8.4" rx="1.4" fill="none" stroke="#7c7c7c" stroke-width="0.9"/>
<rect x="635.4" y="143.6" width="4.4" height="4.4" fill="#7c7c7c"/>
<rect x="626.6" y="148" width="8.6" height="8.6" rx="1.4" fill="none" stroke="#7c7c7c" stroke-width="0.9"/>
<path d="M637.6 150V152.4H631M633 150.6L630.8 152.4L633 154.4" fill="none" stroke="#7c7c7c" stroke-width="0.9"/>
<rect x="652.8" y="141.6" width="8.6" height="8.4" rx="1.4" fill="none" stroke="#7c7c7c" stroke-width="0.9"/>
<rect x="646.4" y="148" width="8.8" height="8.6" rx="1.4" fill="none" stroke="#7c7c7c" stroke-width="0.9"/>
<path d="M654.4 148.4L649.6 153.2M649.4 150.8V153.4H652" fill="none" stroke="#7c7c7c" stroke-width="1"/>
<rect x="667" y="141.8" width="14" height="14.2" rx="2.2" fill="#c2c2c2"/>
<circle cx="674" cy="149" r="3.9" fill="#4e4e4e"/>
<rect x="686.4" y="142.2" width="12" height="13.4" rx="1.6" fill="none" stroke="#6f6f6f" stroke-width="0.9"/>
<rect x="693.6" y="146.6" width="8.4" height="8.6" rx="2" fill="#535353" stroke="#7c7c7c" stroke-width="1.6"/>
<path d="M694.4 149.2H690.4M691.6 147.4L689.2 149.2L691.6 151" fill="#7c7c7c" stroke="#7c7c7c" stroke-width="0.9"/>
<path d="M709 144.4L710.2 155Q710.3 155.8 711.2 155.8H717Q717.9 155.8 718 155L719.2 144.4" fill="none" stroke="#bebebe" stroke-width="1"/>
<path d="M708.2 144.2H720M711.6 144V142.4H716.6V144" fill="none" stroke="#bebebe" stroke-width="1"/>
<path d="M712 146.4V153.6M714.1 146.4V153.6M716.2 146.4V153.6" fill="none" stroke="#bebebe" stroke-width="0.8"/>
<rect x="432" y="163" width="1" height="303" fill="#2a2a2a"/>
<rect x="450" y="163" width="1" height="303" fill="#2a2a2a"/>
<rect x="465" y="191" width="246" height="1" fill="#262626"/>
<path d="M415.2 177.0Q422 168.20000000000002 428.8 177.0" fill="none" stroke="#b9b9b9" stroke-width="1.2"/><path d="M416.2 178.4Q422 171.8 427.8 178.4" fill="none" stroke="#8e8e8e" stroke-width="0.7"/><circle cx="422" cy="177.20000000000002" r="2.9" fill="#b9b9b9"/>
<rect x="436.9" y="170.9" width="10.6" height="10.4" rx="2.6" fill="none" stroke="#343434" stroke-width="1.5"/>
<path d="M453.2 177L457.4 181.4L461.59999999999997 177" fill="none" stroke="#c4c4c4" stroke-width="1.1"/>
<path d="M469.20000000000005 182.8V172.0Q469.20000000000005 171.0 470.20000000000005 171.0H474.6L476.6 173.0H481.6Q482.6 173.0 482.6 174.0V175.4" fill="none" stroke="#b3b3b3" stroke-width="1.1"/><path d="M469.40000000000003 183.20000000000002L472.20000000000005 175.8H485.6L483.0 183.20000000000002Z" fill="#b3b3b3"/>
<text y="175.6" font-size="11.8" fill="#e6e6e6"><tspan x="496.11" textLength="16.37" lengthAdjust="spacingAndGlyphs" font-size="12.5">100</tspan><tspan x="514.18" textLength="9.11" lengthAdjust="spacingAndGlyphs" font-size="12.5"> %</tspan><tspan x="524.74" textLength="23.81" lengthAdjust="spacingAndGlyphs">通常</tspan></text>
<text y="186.7" font-size="11.8" fill="#e6e6e6"><tspan x="494.64" textLength="24.02" lengthAdjust="spacingAndGlyphs">通常</tspan></text>
<rect x="465" y="232" width="246" height="1" fill="#262626"/>
<path d="M415.2 211.39999999999998Q422 202.6 428.8 211.39999999999998" fill="none" stroke="#b9b9b9" stroke-width="1.2"/><path d="M416.2 212.79999999999998Q422 206.2 427.8 212.79999999999998" fill="none" stroke="#8e8e8e" stroke-width="0.7"/><circle cx="422" cy="211.6" r="2.9" fill="#b9b9b9"/>
<rect x="436.9" y="205.29999999999998" width="10.6" height="10.4" rx="2.6" fill="none" stroke="#343434" stroke-width="1.5"/>
<rect x="473" y="195" width="34" height="34" fill="#1c1c1c"/><svg x="474" y="196" width="32" height="32" viewBox="0 0 32 32"><rect width="32" height="32" fill="url(#ck4)"/><g fill="none" stroke="#8a8a8a" stroke-width="0.8" opacity="0.6"><ellipse cx="6.1" cy="13.9" rx="5.2" ry="4.8"/><ellipse cx="24.3" cy="14.4" rx="6.7" ry="4.9"/><path d="M7.6 6.2Q9.6 5.2 11.3 6.2M20.6 6.4Q24 4.6 27.4 5.6M7 26.6Q11 25.2 15 26.4T23.6 26.2"/></g><circle cx="8" cy="14" r="2.7" fill="#151515"/><circle cx="25.3" cy="14.3" r="2.9" fill="#151515"/><circle cx="9.2" cy="13.4" r="1.1" fill="#d0d0d0"/><circle cx="26.8" cy="13.6" r="1.2" fill="#d0d0d0"/></svg>
<text y="206.8" font-size="11.8" fill="#e6e6e6"><tspan x="516.21" textLength="16.37" lengthAdjust="spacingAndGlyphs" font-size="12.5">100</tspan><tspan x="534.28" textLength="9.11" lengthAdjust="spacingAndGlyphs" font-size="12.5"> %</tspan><tspan x="544.84" textLength="23.81" lengthAdjust="spacingAndGlyphs">通常</tspan></text>
<text y="227" font-size="11.8" fill="#e6e6e6"><tspan x="514.43" textLength="24.82" lengthAdjust="spacingAndGlyphs">線画</tspan></text>
<rect x="481" y="261" width="230" height="1" fill="#262626"/>
<path d="M415.2 247.2Q422 238.4 428.8 247.2" fill="none" stroke="#b9b9b9" stroke-width="1.2"/><path d="M416.2 248.6Q422 242 427.8 248.6" fill="none" stroke="#8e8e8e" stroke-width="0.7"/><circle cx="422" cy="247.4" r="2.9" fill="#b9b9b9"/>
<rect x="436.9" y="241.1" width="10.6" height="10.4" rx="2.6" fill="none" stroke="#343434" stroke-width="1.5"/>
<path d="M469 247L473.2 251.4L477.4 247" fill="none" stroke="#c4c4c4" stroke-width="1.1"/>
<path d="M485.40000000000003 252.8V242.0Q485.40000000000003 241.0 486.40000000000003 241.0H490.8L492.8 243.0H497.8Q498.8 243.0 498.8 244.0V245.4" fill="none" stroke="#b3b3b3" stroke-width="1.1"/><path d="M485.6 253.20000000000002L488.40000000000003 245.8H501.8L499.2 253.20000000000002Z" fill="#b3b3b3"/>
<text y="244.8" font-size="11.8" fill="#e6e6e6"><tspan x="512.01" textLength="16.37" lengthAdjust="spacingAndGlyphs" font-size="12.5">100</tspan><tspan x="530.08" textLength="9.11" lengthAdjust="spacingAndGlyphs" font-size="12.5"> %</tspan><tspan x="540.64" textLength="23.81" lengthAdjust="spacingAndGlyphs">通常</tspan></text>
<text y="256.7" font-size="11.8" fill="#e6e6e6"><tspan x="510.22" textLength="24.06" lengthAdjust="spacingAndGlyphs">着色</tspan></text>
<rect x="481" y="302" width="230" height="1" fill="#262626"/>
<path d="M415.2 281.59999999999997Q422 272.79999999999995 428.8 281.59999999999997" fill="none" stroke="#b9b9b9" stroke-width="1.2"/><path d="M416.2 283.0Q422 276.4 427.8 283.0" fill="none" stroke="#8e8e8e" stroke-width="0.7"/><circle cx="422" cy="281.79999999999995" r="2.9" fill="#b9b9b9"/>
<rect x="436.9" y="275.5" width="10.6" height="10.4" rx="2.6" fill="none" stroke="#343434" stroke-width="1.5"/>
<rect x="489" y="265" width="34" height="34" fill="#1c1c1c"/><svg x="490" y="266" width="32" height="32" viewBox="0 0 32 32"><rect width="32" height="32" fill="url(#ck4)"/><path d="M0.2 15.7Q5.2 11.4 10.6 17.5" fill="none" stroke="#e5a26d" stroke-width="1.7"/><path d="M18.2 17.8Q24.6 11.4 31.2 16.3" fill="none" stroke="#e5a26d" stroke-width="1.9"/></svg>
<text y="276.8" font-size="11.8" fill="#e6e6e6"><tspan x="532.21" textLength="16.37" lengthAdjust="spacingAndGlyphs" font-size="12.5">100</tspan><tspan x="550.28" textLength="9.11" lengthAdjust="spacingAndGlyphs" font-size="12.5"> %</tspan><tspan x="560.84" textLength="23.81" lengthAdjust="spacingAndGlyphs">通常</tspan></text>
<text y="297" font-size="11.8" fill="#e6e6e6"><tspan x="529.90" textLength="12.89" lengthAdjust="spacingAndGlyphs">瞼</tspan></text>
<rect x="481" y="343" width="230" height="1" fill="#262626"/>
<path d="M415.2 322.8Q422 314.0 428.8 322.8" fill="none" stroke="#b9b9b9" stroke-width="1.2"/><path d="M416.2 324.20000000000005Q422 317.6 427.8 324.20000000000005" fill="none" stroke="#8e8e8e" stroke-width="0.7"/><circle cx="422" cy="323.0" r="2.9" fill="#b9b9b9"/>
<rect x="436.9" y="316.70000000000005" width="10.6" height="10.4" rx="2.6" fill="none" stroke="#343434" stroke-width="1.5"/>
<rect x="489" y="306" width="34" height="34" fill="#1c1c1c"/><svg x="490" y="307" width="32" height="32" viewBox="0 0 32 32"><rect width="32" height="32" fill="url(#ck4)"/><ellipse cx="6" cy="15.8" rx="6.2" ry="4.5" fill="#fff"/><ellipse cx="24.2" cy="16" rx="7.8" ry="4.8" fill="#fff"/></svg>
<text y="317.8" font-size="11.8" fill="#e6e6e6"><tspan x="532.21" textLength="16.37" lengthAdjust="spacingAndGlyphs" font-size="12.5">100</tspan><tspan x="550.28" textLength="9.11" lengthAdjust="spacingAndGlyphs" font-size="12.5"> %</tspan><tspan x="560.84" textLength="23.81" lengthAdjust="spacingAndGlyphs">通常</tspan></text>
<text y="338" font-size="11.8" fill="#e6e6e6"><tspan x="530.10" textLength="24.24" lengthAdjust="spacingAndGlyphs">白目</tspan></text>
<rect x="481" y="384" width="230" height="1" fill="#262626"/>
<path d="M415.2 363.8Q422 355.0 428.8 363.8" fill="none" stroke="#b9b9b9" stroke-width="1.2"/><path d="M416.2 365.20000000000005Q422 358.6 427.8 365.20000000000005" fill="none" stroke="#8e8e8e" stroke-width="0.7"/><circle cx="422" cy="364.0" r="2.9" fill="#b9b9b9"/>
<rect x="436.9" y="357.70000000000005" width="10.6" height="10.4" rx="2.6" fill="none" stroke="#343434" stroke-width="1.5"/>
<rect x="489" y="347" width="34" height="34" fill="#1c1c1c"/><svg x="490" y="348" width="32" height="32" viewBox="0 0 32 32"><rect width="32" height="32" fill="url(#ck4)"/><path d="M1 14.2L1.4 16Q4.6 16 7.5 17.8Q4.8 14.8 1 14.2Z" fill="#151515"/><path d="M21.2 17.4Q26 15.4 30.4 16.6L31 15.2Q25.6 13.8 21.2 17.4Z" fill="#151515"/></svg>
<text y="358.8" font-size="11.8" fill="#e6e6e6"><tspan x="532.21" textLength="16.37" lengthAdjust="spacingAndGlyphs" font-size="12.5">100</tspan><tspan x="550.28" textLength="9.11" lengthAdjust="spacingAndGlyphs" font-size="12.5"> %</tspan><tspan x="560.84" textLength="23.81" lengthAdjust="spacingAndGlyphs">通常</tspan></text>
<text y="379" font-size="11.8" fill="#e6e6e6"><tspan x="530.28" textLength="13.10" lengthAdjust="spacingAndGlyphs">眉</tspan></text>
<rect x="413" y="425" width="298" height="1" fill="#262626"/>
<path d="M415.2 404.8Q422 396.0 428.8 404.8" fill="none" stroke="#b9b9b9" stroke-width="1.2"/><path d="M416.2 406.20000000000005Q422 399.6 427.8 406.20000000000005" fill="none" stroke="#8e8e8e" stroke-width="0.7"/><circle cx="422" cy="405.0" r="2.9" fill="#b9b9b9"/>
<rect x="436.9" y="398.70000000000005" width="10.6" height="10.4" rx="2.6" fill="none" stroke="#343434" stroke-width="1.5"/>
<rect x="489" y="388" width="34" height="34" fill="#1c1c1c"/><svg x="490" y="389" width="32" height="32" viewBox="0 0 32 32"><rect width="32" height="32" fill="url(#ck4)"/><path d="M0.2 1.4Q3.6 1.6 7.3 3.4M21.2 2.6Q26 2.4 31.4 1.5" fill="none" stroke="#eeaa82" stroke-width="1.5"/><path d="M4.2 30.4Q7 29.8 9.5 29T14 30T19 30.6T27.7 30.2" fill="none" stroke="#eeaa82" stroke-width="1.1"/></svg>
<text y="399.8" font-size="11.8" fill="#e6e6e6"><tspan x="532.21" textLength="16.37" lengthAdjust="spacingAndGlyphs" font-size="12.5">100</tspan><tspan x="550.28" textLength="9.11" lengthAdjust="spacingAndGlyphs" font-size="12.5"> %</tspan><tspan x="560.84" textLength="23.81" lengthAdjust="spacingAndGlyphs">通常</tspan></text>
<text y="420" font-size="11.8" fill="#e6e6e6"><tspan x="530.35" textLength="11.18" lengthAdjust="spacingAndGlyphs">肌</tspan><tspan x="542.33" textLength="16.63" lengthAdjust="spacingAndGlyphs" font-size="12.5">S_1</tspan></text>
<rect x="451" y="426" width="260" height="40" fill="#646c86"/>
<rect x="413" y="466" width="298" height="1" fill="#262626"/>
<path d="M415.2 445.2Q422 436.4 428.8 445.2" fill="none" stroke="#b9b9b9" stroke-width="1.2"/><path d="M416.2 446.6Q422 440 427.8 446.6" fill="none" stroke="#8e8e8e" stroke-width="0.7"/><circle cx="422" cy="445.4" r="2.9" fill="#b9b9b9"/>
<path d="M436.4 448.6L444.8 440.2" stroke="#bdbdbd" stroke-width="2.2" stroke-linecap="round" fill="none"/>
<path d="M433.6 451.2H447" stroke="#bdbdbd" stroke-width="1" fill="none"/>
<path d="M434 450.6L435.4 447.8L437.2 449.6Z" fill="#bdbdbd"/>
<rect x="455.5" y="427.5" width="37" height="37" fill="none" stroke="#dfe2ea" stroke-width="1"/>
<rect x="457" y="429" width="34" height="34" fill="#1c1c1c"/>
<svg x="458" y="430" width="32" height="32" viewBox="0 0 32 32"><rect width="32" height="32" fill="url(#ck4)"/><g transform="translate(7.23 -5.04) scale(0.0679)"><path d="M73.2 353.8L65.1 370L60.4 383L57.5 395L55.2 406L54.4 415.2L56.3 423.8L61 430.6L65.1 436.3L63.4 453L61.9 468.4L62.2 471L65.7 471.6L64.4 496.3L63.2 515.1L60 518.9L60.6 521.6L56.9 530.2L58.8 536.4L65.1 539.9L77.6 540.1L86.4 537.3L102.7 536.4L111.4 533.3L114.6 528.9L113.9 502.6L115.2 497.6L118.9 491.9L123.2 501.3L126.9 512.6L128.2 527.7L131.3 533.3L143.9 537.7L156.4 540.8L170.2 541.4L178.9 537.7L182.1 531.4L180.2 523.9L178.4 520L179.6 517.6L175.2 508.9L172.7 490.1L171.7 472.5L176.7 468.6L173.9 457.6L171.4 441.3L170.8 428.8L172.7 417.5L175.2 410L177.7 402.6L180.2 392L180.8 382.6L179 370L176.4 363.6L172.7 358.8L167 354.4L161.4 351.3L120 350Z" fill="#19191b"/>
<clipPath id="mbclip"><path d="M66.8 467.5L67.2 467.6L67.6 467.7L68 468L68.3 468.2L68.6 468.5L68.9 468.8L69.1 469L70.3 469L70.5 469.4L70.7 469.9L70.9 470.3L70.9 470.9L71 471.4L71 471.9L69.7 496.6L69.7 496.6L68.5 515.4L68.4 516L68.3 516.5L68.1 517.1L67.9 517.6L67.6 518.1L67.3 518.5L65.7 520.3L65.8 520.5L65.9 521L65.9 521.5L65.9 522.1L65.8 522.6L65.7 523.2L65.5 523.7L62.5 530.5L63.2 532.8L66.5 534.6L76.8 534.8L84.8 532.2L85.2 532.1L85.7 532.1L86.1 532L101.6 531.2L108.1 528.9L109.3 527.2L108.6 502.7L108.6 502.2L108.7 501.8L108.8 501.3L110.1 496.3L110.2 495.7L110.5 495.2L110.8 494.7L114.5 489L114.8 488.6L115.1 488.2L115.5 487.9L115.9 487.5L116.3 487.3L116.8 487L117.3 486.9L117.8 486.7L118.3 486.6L118.8 486.6L119.3 486.6L119.8 486.7L120.3 486.8L120.8 486.9L121.3 487.2L121.7 487.4L122.1 487.7L122.5 488L122.9 488.4L123.2 488.8L123.5 489.2L123.7 489.7L128 499.1L128.2 499.7L131.9 511L132.1 511.5L132.2 512.1L133.4 526.1L135 529L145.4 532.6L157.2 535.5L169.2 536.1L175 533.6L176.5 530.8L175.2 525.7L173.6 522.2L173.4 521.7L173.2 521.2L173.1 520.7L173.1 520.2L173.1 519.7L173.2 519.1L173.3 518.6L173.4 518.1L173.7 517.6L173.7 517.6L170.5 511.3L170.2 510.7L170.1 510.2L169.9 509.6L167.4 490.8L167.4 490.4L166.4 472.8L166.4 472.3L166.4 471.8L166.5 471.3L166.7 470.8L166.9 470.3L167.1 469.9L167.4 469.4L167.7 469L167.7 469L169.2 469L171.8 466.9L169.7 458.7L169.6 458.3L167.1 442L167.1 441.5L166.5 429L166.5 428.5L166.6 428.1L168.5 416.8L168.5 416.5L168.6 416.1L171.1 408.6L171.1 408.6L173.6 401.4L175.9 391.4L176.5 382.8L174.8 371.1L172.6 365.8L169.6 361.9L164.6 358L160.2 355.6L120.1 354.3L76 357.9L69.1 371.7L64.5 384.2L61.7 395.9L59.5 406.6L58.7 414.9L60.3 422L64.5 428.1L68.6 433.8L68.8 434.2L69 434.6L69.2 435L69.3 435.4L69.4 435.8L69.4 436.3L69.4 436.7L67.7 453.4L66.3 467.3L66.4 467.4Z" fill="#000" fill-rule="evenodd"/></clipPath>
<g clip-path="url(#mbclip)">
<path d="M68.8 367.6C71.1 364.2 75.3 360.4 77.6 359.4C79.9 358.3 81.3 359.2 82.4 361.3C83.5 363.4 83.8 368.9 84.4 372C85 375.1 86.5 378.7 86 380C85.5 381.3 83.5 379.3 81.4 379.6C79.3 379.9 75.6 380.6 73.2 382C70.8 383.4 68.9 384 66.9 388C64.9 392 62.4 402.2 61 406C59.6 409.8 58.5 413 58.4 411C58.3 409 59.5 399.2 60.4 394C61.3 388.8 62.6 384.4 64 380C65.4 375.6 66.5 371 68.8 367.6Z" fill="#2f2f2f"/>
<path d="M76.6 360.6L81.6 371.3L73.8 378.4" fill="none" stroke="#19191b" stroke-width="2.6" stroke-linejoin="miter"/>
<path d="M68.6 370L73.2 381" fill="none" stroke="#19191b" stroke-width="0.8"/>
<path d="M61.3 410.2L66.9 400.1L80 396L90.1 392.4L98 391.6L105.2 390.8L115 388.4L125.2 384.8L127.7 387.6L122.1 393.9L121.5 407.7L122.7 417.7L121.5 419.4L92.6 419.4L96.4 421.3L77.6 426.3L61.3 425L57.6 419Z" fill="#2f2f2f"/>
<path d="M61.3 400L66.9 400.1L61.3 410.2Z" fill="#19191b"/>
<path d="M68.8 446.3L88.2 436.9L88.9 467.6L66.9 469.5L67.4 456Z" fill="#2f2f2f"/>
<path d="M138.8 368.8L153.9 362.5L166.4 359.4L172.7 366.3L150.1 380.1L146.4 382.6L141.4 381.3L135.1 376.3Z" fill="#2f2f2f"/>
<path d="M154.2 361.6L155.6 370.2L146.2 374.4L150.4 380" fill="none" stroke="#19191b" stroke-width="2.6"/>
<path d="M150.1 381.3C153.4 377.6 157.2 375.2 161 373C164.8 370.8 170.1 367 172.7 368.2C175.3 369.4 176 375.2 176.4 380.1C176.8 385 175.9 392.6 175.2 397.6C174.5 402.6 173.2 406.2 172 410C170.8 413.8 169.7 417.5 167.7 420.2C165.7 422.9 163.1 424.9 160.2 426C157.2 427.1 152.9 427.2 150 426.6C147.1 426.1 144.5 424.6 142.6 422.7C140.7 420.8 139.4 417.5 138.6 415C137.8 412.5 137.1 411 137.6 407.7C138.1 404.4 139.3 399.5 141.4 395.1C143.5 390.7 146.8 385 150.1 381.3Z" fill="#2f2f2f"/>
<path d="M146 383.6Q160 373 174 367.4" fill="none" stroke="#19191b" stroke-width="2.2"/>
<path d="M127.6 443.8L136.3 437.6L158 442.6L160.2 438.4L165.2 438.8L168 449L170.2 460L169.5 467.6L150.1 471.4L128.2 468.3Z" fill="#2f2f2f"/>
<path d="M137.6 436.8L158.6 443.4L160.6 438.6" fill="none" stroke="#19191b" stroke-width="0.8"/>
<path d="M89.2 355L137.6 357L137.6 360L133.6 372L130.4 385L127.7 384.5L105.2 387.6L92.6 382.6L91 370Z" fill="#ffffff"/>
<path d="M89.8 358L92.4 382.4L95.4 384L93.6 368Z" fill="#d9dde3"/>
<path d="M91.5 355L137.4 356.4L124 373L111.6 380.6L100 371Z" fill="#dd9462"/>
<path d="M100.2 369.4C100.8 368.4 105 369.4 108 369C111 368.6 114.8 367.9 118 367C121.2 366.1 126.9 362.7 127.4 363.6C127.9 364.5 123.6 369.9 121 372.6C118.4 375.3 114.3 379.2 111.6 379.6C108.9 380 106.5 376.7 104.6 375C102.7 373.3 99.6 370.4 100.2 369.4Z" fill="#fdd18a"/>
<path d="M90.6 354.6Q96.6 371.4 111.4 381.8Q126 373.4 138.6 358" fill="none" stroke="#bd3f43" stroke-width="3.5" stroke-linejoin="round"/>
<path d="M88.8 354.6Q94.8 372.4 111.4 384.2Q127.6 375 140 359" fill="none" stroke="#19191b" stroke-width="0.8"/>
<path d="M92.6 355Q98.6 370.4 111.4 379.4Q124.6 371.6 137 357" fill="none" stroke="#19191b" stroke-width="0.7"/>
<path d="M90.8 431.3L105.2 426.3L125.2 433.2L125.8 463.3L90.1 462Z" fill="#d2d2d2"/>
<path d="M92 436.4C93.1 434 95.8 434.3 98 433.6C100.2 432.9 101.2 432.2 105 432.4C108.8 432.6 117.9 432.4 120.6 435C123.3 437.6 121.4 443.5 121 448C120.6 452.5 121.2 459.6 118.4 461.8C115.6 464 108.5 461.4 104 461.2C99.5 461 93.5 462.8 91.4 460.6C89.3 458.4 91.1 452 91.2 448C91.3 444 90.9 438.8 92 436.4Z" fill="#ffffff"/>
<path d="M66.9 388.9C67.7 386.2 70.8 384 73.2 382.6C75.6 381.2 78.9 379.9 81.4 380.7C83.9 381.5 87.8 385.6 88.2 387.6C88.6 389.6 85.9 391.2 83.9 392.6C81.9 394 78.6 394.9 76 396C73.4 397.1 69.7 400.1 68.2 398.9C66.7 397.7 66.1 391.6 66.9 388.9Z" fill="#fdd18a" stroke="#19191b" stroke-width="1.4"/>
<path d="M68 394.4C69.6 393 74.8 391.5 78 390.6C81.2 389.7 86 388.8 87 389.2C88 389.6 85.7 391.6 83.9 392.8C82.1 394 78.6 395.2 76 396.2C73.4 397.2 69.7 399.3 68.4 399C67.1 398.7 66.4 395.8 68 394.4Z" fill="#dd9462"/>
<path d="M68.4 389.4L74.6 385.6M69.6 392.4L76 388.4" fill="none" stroke="#dd9462" stroke-width="1"/>
<path d="M121.9 408.9C120.2 406.8 122.4 396.4 123.8 392.6C125.2 388.9 127.4 388 130.1 386.4C132.8 384.8 137.5 383 140.1 383.2C142.7 383.4 145.4 385.7 145.7 387.6C146 389.5 143.3 392.5 142 394.6C140.7 396.7 139 398.3 137.6 400.1C136.2 401.9 136.4 403.7 133.8 405.2C131.2 406.7 123.6 411 121.9 408.9Z" fill="#fdd18a" stroke="#19191b" stroke-width="1.4"/>
<path d="M122.4 402.6C123.8 401.5 127.5 403 130 402.6C132.5 402.2 136.8 399.9 137.4 400.4C138 400.9 136.4 403.9 133.8 405.4C131.2 406.8 123.8 409.6 121.9 409.1C120 408.6 121.1 403.7 122.4 402.6Z" fill="#dd9462"/>
<path d="M126 399.4Q129.6 402.4 133.6 402" fill="none" stroke="#19191b" stroke-width="0.8"/>
<path d="M68.6 471.4L89 468.8L90.4 463.4L125.6 464.4L127 469.4L150 472.8L169.4 470.6L170.4 490L172.6 508L176.6 517L171.4 520.4L160 521L148 524.4L137.6 526.4L130.6 527L129.6 510L126.4 500L119 488.6L113 498L111.4 505L111.8 527L100 526.4L95.1 526.4L80.1 521.6L71.3 522.6L63.6 518.6L66.4 514.4L67.2 490Z" fill="#6f4c2e"/>
<path d="M70.7 478.8L75 476.4L81.6 475.7L82.6 484L82.6 490.1L82 500L81 508.9L78.6 520.1L71.3 521.8L66.3 518.6L67.6 510L69.4 502.6L69.8 490Z" fill="#c8a25a"/>
<path d="M83.9 476.9L95 475.6L106.4 475L108.3 485.1L100 490.6L92 495.7L103.9 495.1L105.2 506.4L104.4 514L102.7 520.1L95.1 526.2L88 524.2L80.8 521.6L82 512L82.6 502.6L83.6 490Z" fill="#c8a25a"/>
<path d="M74.5 507.6L87.6 509.6L79.4 512.4Z" fill="#6f4c2e"/>
<path d="M83 472L83.2 490L81.2 508L78.8 521" fill="none" stroke="#2a1c14" stroke-width="0.9"/>
<path d="M106.4 479.2L113.8 482.5L125.1 475.7L140 477L151.4 478.8L152 492L152.6 506.4L157.6 515.1L153 520L148.9 523.9L137.6 525.2L133.2 518.9L131.8 508L131.3 500.1L135 496.4L141.4 493.8L133 491.4L127.6 488.8L120 485.4Z" fill="#c8a25a"/>
<path d="M152.6 480L161 481.4L167.7 483.8L169 494L170.2 502.6L172 510L175.2 517.6L171.4 520.1L162.7 514.5L157.8 514.4L154 508L152.8 502.6L152.6 490Z" fill="#c8a25a"/>
<path d="M148.6 505.6L161.4 505.2L156.6 510.6Z" fill="#6f4c2e"/>
<path d="M152 474L153.2 490L154.4 504L158 516" fill="none" stroke="#2a1c14" stroke-width="0.9"/>
<path d="M106.3 480L131.3 490.4L117 491Z" fill="#19191b"/>
<path d="M100 468L112 473.6L128 480" fill="none" stroke="#3a2618" stroke-width="0.7"/>
<path d="M109.6 465L110.4 480" fill="none" stroke="#3a2618" stroke-width="0.8"/>
<path d="M63.8 531.4C63.5 530.1 65.8 527.9 67 526.4C68.2 524.9 69.5 523 71.3 522.6C73.1 522.2 75.5 523.4 77.6 524C79.7 524.6 81.7 525.7 83.9 526.4C86.1 527.1 88.5 527.7 91 528.4C93.5 529.1 99.1 529.9 98.9 530.4C98.7 530.9 92.9 531.3 90 531.6C87.1 531.9 84.9 531.6 81.4 532C77.9 532.4 71.7 534 68.8 533.9C65.9 533.8 64.1 532.6 63.8 531.4Z" fill="#8c6b62"/>
<path d="M71.3 522.4L83.9 526L98.9 530.2L86 528.8L74.6 525.4L69 526.4Z" fill="#4e332a"/>
<path d="M63.6 531.4L68.6 525.6L66.6 531L72 533.4L66 534Z" fill="#ffffff"/>
<path d="M141.4 530.4C141.4 529.2 146.9 527.2 150 525.6C153.1 524 156.6 521.1 160.2 520.8C163.8 520.5 168.8 522.3 171.4 523.9C174 525.5 175.6 528.2 175.8 530.2C176 532.2 175.3 534.8 172.7 535.8C170.1 536.8 164 536.9 160.2 536.4C156.4 535.9 153.2 533.9 150.1 532.9C147 531.9 141.4 531.6 141.4 530.4Z" fill="#8c6b62"/>
<path d="M141 530.4L160.2 520.6L168 522L158 524.6L148 529Z" fill="#4e332a"/>
<path d="M174.6 525.4Q177 530 173.6 535" fill="none" stroke="#e8e8e8" stroke-width="0.7"/>
<path d="M134 531.6L141.6 528.6L150 524L160.2 519.6L171.4 520.4L178 516.6" fill="none" stroke="#19191b" stroke-width="2.4" stroke-linejoin="round"/>
<path d="M62 518L66.6 520L71.3 520.8L80.1 522L88 524.8L95.1 527.2L104 527L113 528" fill="none" stroke="#19191b" stroke-width="2.4" stroke-linejoin="round"/>
</g><path d="M13.8 236C13.5 244 15.7 244 16.2 248C16.7 252 16.9 255.9 16.6 260C16.3 264.1 14.6 268.2 14.4 272.6C14.2 277 14.3 281.8 15.7 286.4C17.1 291 20.4 296.3 22.6 300C24.8 303.7 26.7 305 28.8 308.8C30.9 312.6 32.6 318.4 35.1 322.6C37.6 326.8 41 330.8 43.9 333.9C46.8 337 49 339.1 52.6 341.4C56.2 343.7 61.4 345.9 65.2 347.6C69 349.3 70.1 350.3 75.2 351.4C80.3 352.5 88.5 353.7 96 354.4C103.5 355.1 112.2 355.6 120 355.8C127.8 356 136.1 356.2 143 355.4C149.9 354.6 156 352.7 161.3 350.8C166.7 348.9 170.7 346.5 175.1 343.9C179.5 341.3 183.4 338.5 187.6 335.1C191.8 331.7 197.6 325.5 200.1 323.4C202.6 321.3 200.7 322.8 202.8 322.5C204.9 322.2 209 322.6 212.7 321.4C216.4 320.2 221 318.2 225.2 315.1C229.4 312 234.6 306.8 237.7 302.6C240.8 298.4 242.8 294.2 244 290C245.2 285.8 245.5 282 245 277.4C244.5 272.8 242.7 266.9 241.2 262.3C239.7 257.7 238.7 260.4 236 250C233.3 239.6 231 215 225 200C219 185 220.8 168.3 200 160C179.2 151.7 126.7 150 100 150C73.3 150 53.7 151.7 40 160C26.3 168.3 22.4 187.3 18 200C13.6 212.7 14.1 228 13.8 236Z" fill="#19191b"/>
<path d="M21 245C20.8 255.2 21 256.8 20.6 261.4C20.2 266 18.6 268.6 18.4 272.6C18.2 276.6 18.2 281.2 19.4 285.5C20.6 289.8 23.5 296 25.5 298.6C27.5 301.2 28.9 298.1 31.3 301.3C33.7 304.5 37 312.4 40.1 317.6C43.2 322.8 46.3 328.4 50.1 332.6C53.9 336.8 58.1 339.9 62.7 342.6C67.3 345.3 72.2 347.3 77.7 348.9C83.2 350.5 89.3 351.4 96 352.2C102.7 353 111 353.5 118 353.6C125 353.7 132.7 353.5 138 352.6C143.3 351.7 145.9 350 150 348.3C154.1 346.6 158.3 344.9 162.5 342.7C166.7 340.5 170.9 337.8 175.1 335.1C179.3 332.4 183.6 329.3 187.6 326.4C191.6 323.5 195.1 319.4 198.9 317.6C202.7 315.8 206.2 316.9 210.2 315.7C214.2 314.4 218.9 312.7 222.7 310.1C226.4 307.5 230 303.9 232.7 300.1C235.4 296.3 237.8 291.4 239 287.5C240.2 283.6 240.2 280.4 240 277C239.8 273.6 239.5 270.5 238 267.3C236.5 264.1 233.8 262.4 231.1 257.9C228.4 253.3 224.7 249.7 222 240C219.3 230.3 219.5 213.3 215 200C210.5 186.7 214.2 168.3 195 160C175.8 151.7 125.8 150 100 150C74.2 150 53 151.7 40 160C27 168.3 25.2 185.8 22 200C18.8 214.2 21.2 234.8 21 245Z" fill="#dd9462"/>
<path d="M21 245C20.8 255.2 20.3 256.8 20.6 261.4C20.9 266 21.7 267.8 22.6 272.6C23.6 277.4 24.9 285.4 26.3 290.2C27.8 295 29 296.7 31.3 301.3C33.6 305.9 37 312.4 40.1 317.6C43.2 322.8 46.3 328.4 50.1 332.6C53.9 336.8 58.1 339.9 62.7 342.6C67.3 345.3 72.2 347.3 77.7 348.9C83.2 350.5 90.3 351.5 96 352.2C101.7 352.9 106.7 353.4 112 353C117.3 352.6 123.2 351 128 349.6C132.8 348.2 136.8 346.2 140.5 344.4C144.2 342.6 146.3 340.9 150 338.9C153.7 336.9 158.3 335.3 162.5 332.6C166.7 329.9 171.5 325.9 175.1 322.6C178.7 319.3 181.3 316.4 183.8 312.6C186.3 308.9 188.4 304.5 190.1 300.1C191.8 295.7 193 291.7 193.9 286.3C194.8 280.9 195.3 274.1 195.6 268C195.8 261.9 195.6 256.7 195.4 250C195.2 243.3 195 233.9 194.4 227.6C193.8 221.3 192.7 215.9 191.7 212C190.7 208.1 189.9 207.6 188.5 203.9C187.1 200.2 185.6 193.3 183.5 190C181.4 186.7 178.8 185.8 176 183.8C173.2 181.8 170.5 181.3 167 178.2C163.5 175.1 166.2 169.7 155 165C143.8 160.3 119.2 150.8 100 150C80.8 149.2 53 151.7 40 160C27 168.3 25.2 185.8 22 200C18.8 214.2 21.2 234.8 21 245Z" fill="#fdd18a"/>
<path d="M19.4 256C19.7 258.8 20.4 266.9 21.4 272.6C22.4 278.3 23.8 285.2 25.2 290C26.6 294.8 28.9 299.7 29.6 301.6" fill="none" stroke="#19191b" stroke-width="3" stroke-linecap="round" stroke-linejoin="round"/>
<path d="M226.1 264.8C226.3 262.9 229.3 259 231.1 259.4C232.9 259.8 235.6 263.9 236.8 267.3C238.1 270.7 238.7 275.9 238.6 279.9C238.5 283.8 237.2 288.1 236 291C234.8 293.9 232.7 297.4 231.5 297.5C230.3 297.6 228.7 294.2 228.9 291.3C229.1 288.4 232.5 283.5 232.7 280C232.9 276.5 231 273 229.9 270.5C228.8 268 225.9 266.7 226.1 264.8Z" fill="#fdd18a"/>
<path d="M229.9 270.1C228.6 270.9 224.2 273 222 274.6C219.8 276.2 217.8 277.9 216.4 280C215.1 282.1 214.1 285.4 213.9 287.5C213.7 289.6 214.5 291 215.2 292.5C215.9 294 218.1 294.8 218.3 296.3C218.5 297.8 217.6 299.8 216.4 301.3C215.2 302.8 212.2 304.5 211.4 305.1" fill="none" stroke="#19191b" stroke-width="1.4" stroke-linecap="round" stroke-linejoin="round"/><path d="M13.8 236L7.5 220.2L1 205.8L6.9 207.6L8.8 192.6L9.4 176.3L12.5 178.8L16.3 167.5L18.8 155.5L20.8 157.2L31.3 138.9L41.4 121.4L48.2 113.8L49.1 120.7L60.2 108.6L61.2 115.1L77.1 101.6L76.7 106.9L80 104.4L92.5 97.5L108.2 93.5L110.1 100.7L113.2 95.3L120.1 95L120.4 86L123.2 91.3L132.6 95.7L141.4 98.2L141.7 89.4L146.4 95.7L155.2 100.7L167.7 106.9L172.4 107.5L171.1 101L180.5 107.5L193.1 115.1L199.3 119.1L203.7 114.4L206.2 125.1L216.6 113.8L216.2 122.6L218.1 135.7L226.6 133.2L228.2 145.1L230.7 154.2L240.4 150.4L240.7 171L241.2 182.6L249.9 182.6L246.2 197.6L245.2 210.8L253.9 210.8L247.4 222L255.6 225.2L250.2 230.2L257.5 234.6L251.2 240.2L242.4 251L241.2 254.8L246.2 259.2L241.2 262.3L231.1 257.9L223.6 259.8L212 274L202.9 287.4L202.2 265L201.7 248.5L204.8 247.3L202.3 241L198.6 222.7L200.4 221.4L197.6 217.6L202.3 214.5L194.2 207.4L201.1 205.1L187.9 193.2L200.4 179.4L184 179.4L162.6 177.3L170.1 171L163.2 172.3L138.1 174.8L115.6 179.4L121.2 172.8L94.9 182.3L92.1 177.6L92.7 181.3L87.7 178.2L89 183.2L77.7 176.3L80.2 185.1L65.2 179.4L51.4 174.4L52.6 178.8L50.1 176.9L49.5 180.7L48.2 179.4L41.4 178.2L35.1 183.8L26.9 197.6L21.9 217.7L20 236Z" fill="#19191b"/>
<path d="M7.2 212.3L10.3 219.1L14.6 229.9L15.4 230.8L16.7 230.8L17.3 230.3L17.6 229.6L19 216.9L24.3 196L32.6 182.5L24.5 200.2L16.6 235.5L19.5 235.5L21.4 217.6L21.4 217.6L26.4 197.5L26.4 197.4L26.4 197.4L26.5 197.3L34.7 183.5L34.7 183.5L34.7 183.5L34.8 183.4L41.1 177.8L41.1 177.8L41.1 177.8L41.2 177.7L41.2 177.7L41.3 177.7L41.3 177.7L41.4 177.7L41.4 177.7L41.5 177.7L48.3 178.9L48.3 178.9L48.4 178.9L48.4 179L48.5 179L48.5 179L48.6 179L49.2 179.7L49.6 176.8L49.6 176.8L49.6 176.7L49.7 176.7L49.7 176.6L49.7 176.6L49.7 176.6L49.8 176.5L49.8 176.5L49.8 176.5L49.9 176.4L49.9 176.4L50 176.4L50 176.4L50.1 176.4L50.1 176.4L50.2 176.4L50.2 176.4L50.3 176.4L50.3 176.5L50.4 176.5L50.4 176.5L51.7 177.5L50.9 174.5L50.9 174.5L50.9 174.4L50.9 174.4L50.9 174.3L50.9 174.3L50.9 174.2L50.9 174.2L51 174.1L51 174.1L51 174.1L51.1 174L51.1 174L51.1 174L51.2 173.9L51.2 173.9L51.3 173.9L51.3 173.9L51.4 173.9L51.4 173.9L51.5 173.9L51.5 173.9L51.6 173.9L65.4 178.9L65.4 178.9L79.4 184.3L77.2 176.4L77.2 176.4L77.2 176.3L77.2 176.3L77.2 176.2L77.2 176.2L77.2 176.1L77.2 176.1L77.3 176.1L77.3 176L77.3 176L77.4 175.9L77.4 175.9L77.4 175.9L77.5 175.8L77.5 175.8L77.6 175.8L77.6 175.8L77.7 175.8L77.7 175.8L77.8 175.8L77.8 175.8L77.9 175.8L77.9 175.8L78 175.9L88.2 182.1L87.2 178.3L87.2 178.3L87.2 178.2L87.2 178.2L87.2 178.1L87.2 178.1L87.2 178L87.2 178L87.3 177.9L87.3 177.9L87.3 177.9L87.4 177.8L87.4 177.8L87.4 177.8L87.5 177.7L87.5 177.7L87.6 177.7L87.6 177.7L87.7 177.7L87.7 177.7L87.8 177.7L87.8 177.7L87.9 177.7L87.9 177.8L88 177.8L92 180.3L91.6 177.7L91.6 177.6L91.6 177.6L91.6 177.5L91.6 177.5L91.6 177.4L91.6 177.4L91.7 177.3L91.7 177.3L91.7 177.3L91.8 177.2L91.8 177.2L91.8 177.2L91.9 177.1L91.9 177.1L92 177.1L92 177.1L92.1 177.1L92.1 177.1L92.2 177.1L92.2 177.1L92.3 177.1L92.3 177.1L92.4 177.2L92.4 177.2L92.4 177.2L92.5 177.3L92.5 177.3L92.5 177.3L95.1 181.7L121 172.3L121.1 172.3L121.1 172.3L121.2 172.3L121.2 172.3L121.3 172.3L121.3 172.3L121.4 172.3L121.4 172.3L121.5 172.4L121.5 172.4L121.5 172.4L121.6 172.5L121.6 172.5L121.6 172.5L121.6 172.6L121.7 172.6L121.7 172.7L121.7 172.7L121.7 172.8L121.7 172.8L121.7 172.9L121.7 172.9L121.7 173L121.7 173L121.6 173L121.6 173.1L121.6 173.1L116.9 178.6L138 174.3L138.1 174.3L163.1 171.8L170 170.5L170.1 170.5L170.1 170.5L170.2 170.5L170.2 170.5L170.2 170.5L170.3 170.5L170.3 170.6L170.4 170.6L170.4 170.6L170.5 170.6L170.5 170.7L170.5 170.7L170.5 170.8L170.6 170.8L170.6 170.9L170.6 170.9L170.6 170.9L170.6 171L170.6 171L170.6 171.1L170.6 171.1L170.6 171.2L170.5 171.2L170.5 171.3L170.5 171.3L170.5 171.3L170.4 171.4L163.8 176.9L184 178.9L195.3 178.9L194.6 176.4L200.7 176.4L202.3 177.1L203.2 178.3L203.4 179.8L202.8 181.2L193.2 191.8L193 192.5L206 190L207.3 185.1L209.5 177L213.6 178.8L216.5 173.8L218.5 165L222 166.8L226.5 166L228 160L227.5 155L223.5 144L219.8 138.3L218.7 138.6L217.8 138.7L216.6 138.3L215.7 137.5L215.1 136.1L213.6 125.4L213.2 124.5L212.2 124L211.3 124.2L207.7 127.7L206.6 128.1L205.2 127.9L204.4 127.5L203.6 126.6L202.6 122.8L202 122.1L201.1 121.7L199.4 122.1L197.9 121.8L176.8 108.6L175.5 108.7L174 110L172.6 110.5L167 109.8L153.9 103.4L145.9 98.9L145.1 98.9L144.5 99.1L143.4 100.4L142.6 100.9L140.9 101.2L131.6 98.5L124.4 95.3L123.4 95.6L122.1 97.2L121.1 97.8L115.7 98.2L115.1 98.4L114.6 98.9L112.4 102.7L111.4 103.4L110.6 103.7L109.1 103.5L107.9 102.7L107.3 101.7L106.4 98.4L106 97.9L105.3 97.5L104.5 97.5L93.7 100.3L81.7 106.9L78 109.6L76.3 109.9L74.1 108.9L73 109L62.4 117.8L60.7 118.1L59.6 117.7L58.3 116.6L57.7 116.5L56.9 116.7L51.3 122.7L50.4 123.4L49.5 123.7L48.3 123.6L45.8 122.1L44.5 122.5L43.8 123.3L23.4 158.7L22.9 159.4L21.3 160.2L20.8 160.9L19.1 168.5L15.2 180L14.4 181.2L12.7 182L12.2 182.9L11.8 193L9.9 207.9L9.4 209.3L7.3 211.2Z" fill="#232323" fill-rule="evenodd"/>
<path d="M28.2 160.6L33 151L38.5 137.5L43.9 123.9L44.3 131L44.1 135.1L47.5 137.3L52.6 138.3L58.5 136.6L62.5 133.8L65.2 131.4L66 133.4L67.5 135L71 136.4L75.2 135.8L84 132L94 126.1L89 130.4L85.6 134.6L84.6 137.6L85.8 139.6L89.6 140L95.8 137.6L88 143.4L76 152.6L78.4 147L79.2 143.6L77.4 141.4L73.4 142.6L67 147.4L57.4 156.6L60.2 150L60.4 147.2L58.4 146L52 148.4L46 149.4L40.6 147.2L36 150Z" fill="#e4e4e2"/>
<path d="M107.3 131.6L106.6 138L105 143L98.2 147.7L102.6 140.6Z" fill="#e4e4e2"/>
<path d="M120.7 130.1L119.3 137L118.8 141.4L121 141.6L136.4 135.1L123.5 143.5L111.1 150.8L115.5 143Z" fill="#e4e4e2"/>
<path d="M153.1 130.8L153.6 138L147 146.4L150.6 138Z" fill="#e4e4e2"/>
<path d="M159 140.2L159.2 143L156.4 147L157.6 143Z" fill="#e4e4e2"/><circle cx="100" cy="290" r="9" fill="#dd9462"/></g></svg>
<text y="440.8" font-size="11.8" fill="#eceef4"><tspan x="500.21" textLength="16.37" lengthAdjust="spacingAndGlyphs" font-size="12.5">100</tspan><tspan x="518.28" textLength="9.11" lengthAdjust="spacingAndGlyphs" font-size="12.5"> %</tspan><tspan x="528.84" textLength="23.81" lengthAdjust="spacingAndGlyphs">通常</tspan></text>
<text y="461" font-size="11.8" fill="#eceef4"><tspan x="498.44" textLength="24.23" lengthAdjust="spacingAndGlyphs">本体</tspan></text>
</svg>
</body>
</html>
